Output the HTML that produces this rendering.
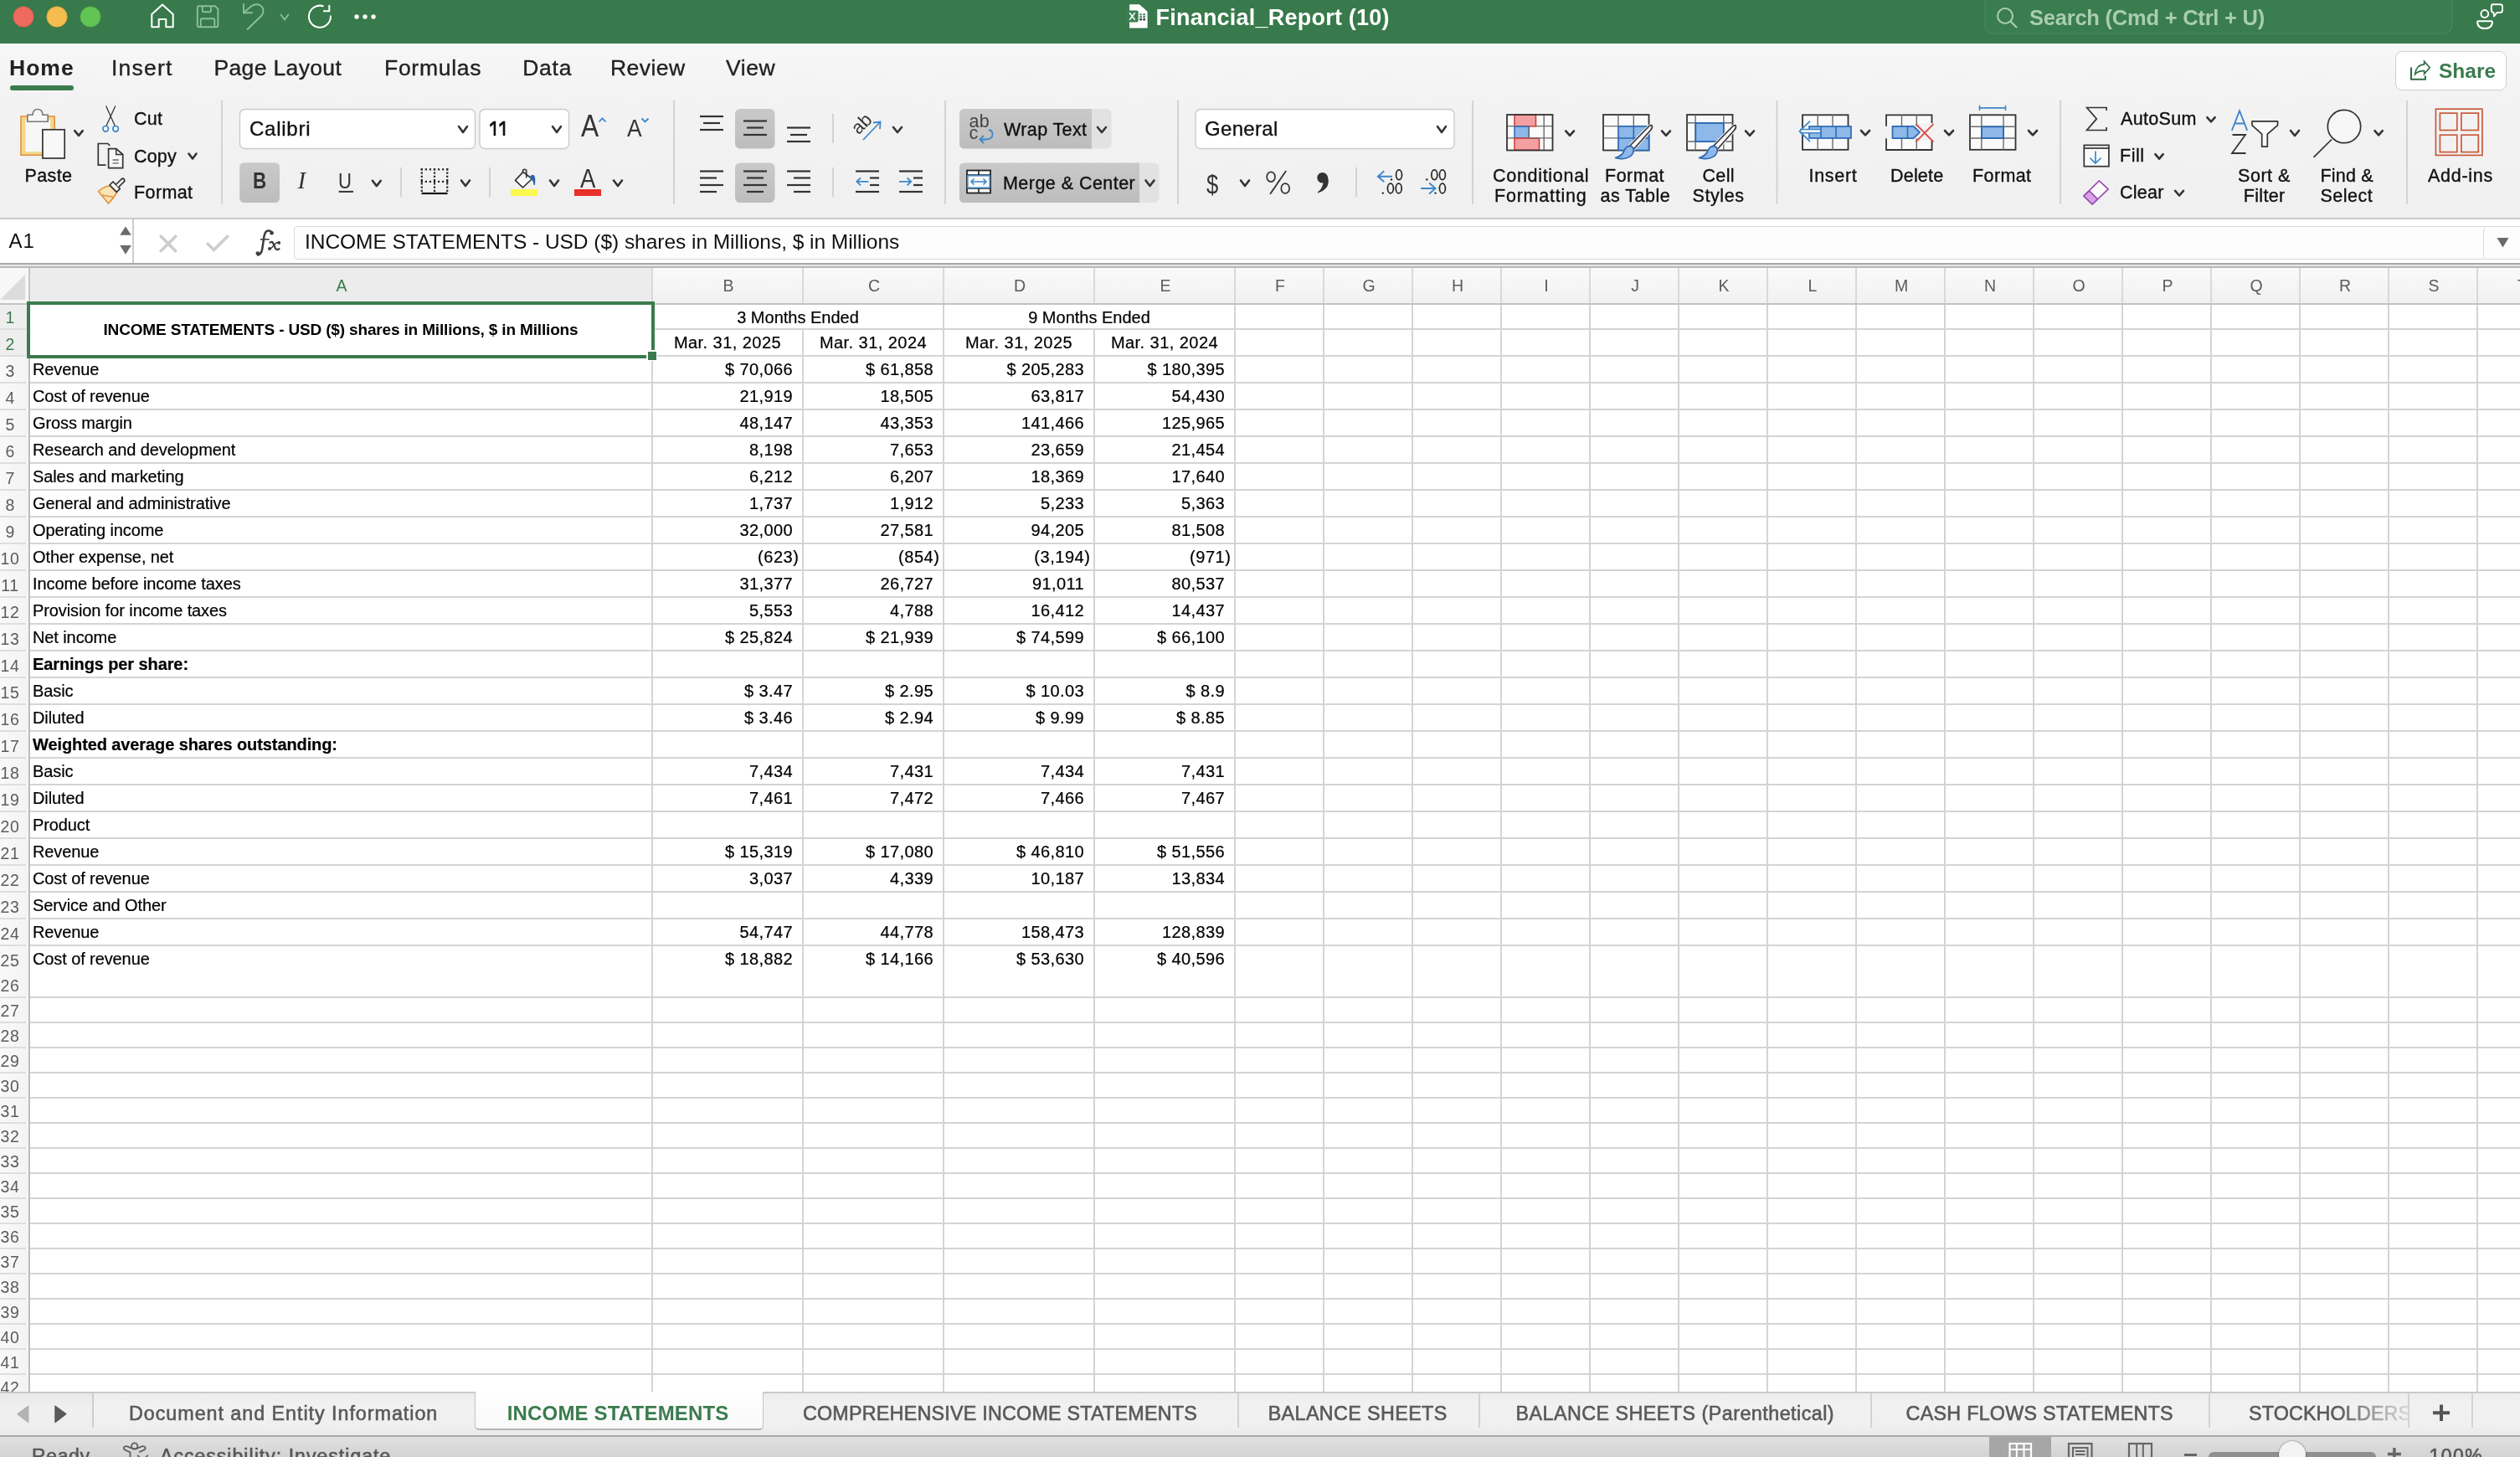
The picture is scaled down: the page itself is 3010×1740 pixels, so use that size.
<!DOCTYPE html>
<html><head><meta charset="utf-8"><style>
html,body{margin:0;padding:0;width:3010px;height:1740px;overflow:hidden;background:#fff;font-family:"Liberation Sans", sans-serif}
.t{position:absolute;white-space:pre;line-height:1;font-family:"Liberation Sans", sans-serif}
.r{position:absolute;display:block}
#root{position:absolute;left:0;top:0;width:3010px;height:1740px;overflow:hidden;will-change:transform}
</style></head><body><div id="root">
<div class="r" style="left:0px;top:262px;width:3010px;height:52px;background:#fff"></div><div class="r" style="left:0px;top:314px;width:3010px;height:2px;background:#a9a9a9"></div><div class="r" style="left:0px;top:316px;width:3010px;height:2px;background:#e6e6e6"></div><div class="r" style="left:0px;top:318px;width:3010px;height:2px;background:#b9b9b9"></div><div class="r" style="left:0px;top:320px;width:3010px;height:42px;background:linear-gradient(#fafafa,#f1f1f1)"></div><div class="r" style="left:0px;top:320px;width:34px;height:42px;background:#f7f7f7"></div><svg class="r" style="left:0px;top:328px;" width="31" height="31" viewBox="0 0 31 31"><polygon points="30,0 30,30 0,30" fill="#dcdcdc"/></svg><div class="r" style="left:36px;top:320px;width:742px;height:42px;background:#ececec"></div><div class="r" style="left:36px;top:364px;width:2974px;height:1298px;background:#fff"></div><div class="r" style="left:0px;top:364px;width:34px;height:1298px;background:linear-gradient(90deg,#f9f9f9,#f3f3f3)"></div><div class="r" style="left:0px;top:364px;width:32px;height:60px;background:#eeeeee"></div><div class="r" style="left:34px;top:320px;width:2px;height:44px;background:#c6c6c6"></div><div class="r" style="left:778px;top:320px;width:2px;height:42px;background:#d9d9d9"></div><div class="r" style="left:958px;top:320px;width:2px;height:42px;background:#d9d9d9"></div><div class="r" style="left:1126px;top:320px;width:2px;height:42px;background:#d9d9d9"></div><div class="r" style="left:1306px;top:320px;width:2px;height:42px;background:#d9d9d9"></div><div class="r" style="left:1474px;top:320px;width:2px;height:42px;background:#d9d9d9"></div><div class="r" style="left:1580px;top:320px;width:2px;height:42px;background:#d9d9d9"></div><div class="r" style="left:1686px;top:320px;width:2px;height:42px;background:#d9d9d9"></div><div class="r" style="left:1792px;top:320px;width:2px;height:42px;background:#d9d9d9"></div><div class="r" style="left:1898px;top:320px;width:2px;height:42px;background:#d9d9d9"></div><div class="r" style="left:2004px;top:320px;width:2px;height:42px;background:#d9d9d9"></div><div class="r" style="left:2110px;top:320px;width:2px;height:42px;background:#d9d9d9"></div><div class="r" style="left:2216px;top:320px;width:2px;height:42px;background:#d9d9d9"></div><div class="r" style="left:2322px;top:320px;width:2px;height:42px;background:#d9d9d9"></div><div class="r" style="left:2428px;top:320px;width:2px;height:42px;background:#d9d9d9"></div><div class="r" style="left:2534px;top:320px;width:2px;height:42px;background:#d9d9d9"></div><div class="r" style="left:2640px;top:320px;width:2px;height:42px;background:#d9d9d9"></div><div class="r" style="left:2746px;top:320px;width:2px;height:42px;background:#d9d9d9"></div><div class="r" style="left:2852px;top:320px;width:2px;height:42px;background:#d9d9d9"></div><div class="r" style="left:2958px;top:320px;width:2px;height:42px;background:#d9d9d9"></div><div class="r" style="left:0px;top:362px;width:3010px;height:2px;background:#c3c3c3"></div><div class="r" style="left:780px;top:392px;width:2230px;height:2px;background:#d4d4d4"></div><div class="r" style="left:0px;top:392px;width:31px;height:2px;background:#dedede"></div><div class="r" style="left:36px;top:424px;width:2974px;height:2px;background:#d4d4d4"></div><div class="r" style="left:0px;top:424px;width:31px;height:2px;background:#dedede"></div><div class="r" style="left:36px;top:456px;width:2974px;height:2px;background:#d4d4d4"></div><div class="r" style="left:0px;top:456px;width:31px;height:2px;background:#dedede"></div><div class="r" style="left:36px;top:488px;width:2974px;height:2px;background:#d4d4d4"></div><div class="r" style="left:0px;top:488px;width:31px;height:2px;background:#dedede"></div><div class="r" style="left:36px;top:520px;width:2974px;height:2px;background:#d4d4d4"></div><div class="r" style="left:0px;top:520px;width:31px;height:2px;background:#dedede"></div><div class="r" style="left:36px;top:552px;width:2974px;height:2px;background:#d4d4d4"></div><div class="r" style="left:0px;top:552px;width:31px;height:2px;background:#dedede"></div><div class="r" style="left:36px;top:584px;width:2974px;height:2px;background:#d4d4d4"></div><div class="r" style="left:0px;top:584px;width:31px;height:2px;background:#dedede"></div><div class="r" style="left:36px;top:616px;width:2974px;height:2px;background:#d4d4d4"></div><div class="r" style="left:0px;top:616px;width:31px;height:2px;background:#dedede"></div><div class="r" style="left:36px;top:648px;width:2974px;height:2px;background:#d4d4d4"></div><div class="r" style="left:0px;top:648px;width:31px;height:2px;background:#dedede"></div><div class="r" style="left:36px;top:680px;width:2974px;height:2px;background:#d4d4d4"></div><div class="r" style="left:0px;top:680px;width:31px;height:2px;background:#dedede"></div><div class="r" style="left:36px;top:712px;width:2974px;height:2px;background:#d4d4d4"></div><div class="r" style="left:0px;top:712px;width:31px;height:2px;background:#dedede"></div><div class="r" style="left:36px;top:744px;width:2974px;height:2px;background:#d4d4d4"></div><div class="r" style="left:0px;top:744px;width:31px;height:2px;background:#dedede"></div><div class="r" style="left:36px;top:776px;width:2974px;height:2px;background:#d4d4d4"></div><div class="r" style="left:0px;top:776px;width:31px;height:2px;background:#dedede"></div><div class="r" style="left:36px;top:808px;width:2974px;height:2px;background:#d4d4d4"></div><div class="r" style="left:0px;top:808px;width:31px;height:2px;background:#dedede"></div><div class="r" style="left:36px;top:840px;width:2974px;height:2px;background:#d4d4d4"></div><div class="r" style="left:0px;top:840px;width:31px;height:2px;background:#dedede"></div><div class="r" style="left:36px;top:872px;width:2974px;height:2px;background:#d4d4d4"></div><div class="r" style="left:0px;top:872px;width:31px;height:2px;background:#dedede"></div><div class="r" style="left:36px;top:904px;width:2974px;height:2px;background:#d4d4d4"></div><div class="r" style="left:0px;top:904px;width:31px;height:2px;background:#dedede"></div><div class="r" style="left:36px;top:936px;width:2974px;height:2px;background:#d4d4d4"></div><div class="r" style="left:0px;top:936px;width:31px;height:2px;background:#dedede"></div><div class="r" style="left:36px;top:968px;width:2974px;height:2px;background:#d4d4d4"></div><div class="r" style="left:0px;top:968px;width:31px;height:2px;background:#dedede"></div><div class="r" style="left:36px;top:1000px;width:2974px;height:2px;background:#d4d4d4"></div><div class="r" style="left:0px;top:1000px;width:31px;height:2px;background:#dedede"></div><div class="r" style="left:36px;top:1032px;width:2974px;height:2px;background:#d4d4d4"></div><div class="r" style="left:0px;top:1032px;width:31px;height:2px;background:#dedede"></div><div class="r" style="left:36px;top:1064px;width:2974px;height:2px;background:#d4d4d4"></div><div class="r" style="left:0px;top:1064px;width:31px;height:2px;background:#dedede"></div><div class="r" style="left:36px;top:1096px;width:2974px;height:2px;background:#d4d4d4"></div><div class="r" style="left:0px;top:1096px;width:31px;height:2px;background:#dedede"></div><div class="r" style="left:36px;top:1128px;width:2974px;height:2px;background:#d4d4d4"></div><div class="r" style="left:0px;top:1128px;width:31px;height:2px;background:#dedede"></div><div class="r" style="left:36px;top:1190px;width:2974px;height:2px;background:#d4d4d4"></div><div class="r" style="left:0px;top:1190px;width:31px;height:2px;background:#dedede"></div><div class="r" style="left:36px;top:1220px;width:2974px;height:2px;background:#d4d4d4"></div><div class="r" style="left:0px;top:1220px;width:31px;height:2px;background:#dedede"></div><div class="r" style="left:36px;top:1250px;width:2974px;height:2px;background:#d4d4d4"></div><div class="r" style="left:0px;top:1250px;width:31px;height:2px;background:#dedede"></div><div class="r" style="left:36px;top:1280px;width:2974px;height:2px;background:#d4d4d4"></div><div class="r" style="left:0px;top:1280px;width:31px;height:2px;background:#dedede"></div><div class="r" style="left:36px;top:1310px;width:2974px;height:2px;background:#d4d4d4"></div><div class="r" style="left:0px;top:1310px;width:31px;height:2px;background:#dedede"></div><div class="r" style="left:36px;top:1340px;width:2974px;height:2px;background:#d4d4d4"></div><div class="r" style="left:0px;top:1340px;width:31px;height:2px;background:#dedede"></div><div class="r" style="left:36px;top:1370px;width:2974px;height:2px;background:#d4d4d4"></div><div class="r" style="left:0px;top:1370px;width:31px;height:2px;background:#dedede"></div><div class="r" style="left:36px;top:1400px;width:2974px;height:2px;background:#d4d4d4"></div><div class="r" style="left:0px;top:1400px;width:31px;height:2px;background:#dedede"></div><div class="r" style="left:36px;top:1430px;width:2974px;height:2px;background:#d4d4d4"></div><div class="r" style="left:0px;top:1430px;width:31px;height:2px;background:#dedede"></div><div class="r" style="left:36px;top:1460px;width:2974px;height:2px;background:#d4d4d4"></div><div class="r" style="left:0px;top:1460px;width:31px;height:2px;background:#dedede"></div><div class="r" style="left:36px;top:1490px;width:2974px;height:2px;background:#d4d4d4"></div><div class="r" style="left:0px;top:1490px;width:31px;height:2px;background:#dedede"></div><div class="r" style="left:36px;top:1520px;width:2974px;height:2px;background:#d4d4d4"></div><div class="r" style="left:0px;top:1520px;width:31px;height:2px;background:#dedede"></div><div class="r" style="left:36px;top:1550px;width:2974px;height:2px;background:#d4d4d4"></div><div class="r" style="left:0px;top:1550px;width:31px;height:2px;background:#dedede"></div><div class="r" style="left:36px;top:1580px;width:2974px;height:2px;background:#d4d4d4"></div><div class="r" style="left:0px;top:1580px;width:31px;height:2px;background:#dedede"></div><div class="r" style="left:36px;top:1610px;width:2974px;height:2px;background:#d4d4d4"></div><div class="r" style="left:0px;top:1610px;width:31px;height:2px;background:#dedede"></div><div class="r" style="left:36px;top:1640px;width:2974px;height:2px;background:#d4d4d4"></div><div class="r" style="left:0px;top:1640px;width:31px;height:2px;background:#dedede"></div><div class="r" style="left:778px;top:364px;width:2px;height:1298px;background:#d4d4d4"></div><div class="r" style="left:958px;top:394px;width:2px;height:1268px;background:#d4d4d4"></div><div class="r" style="left:1126px;top:364px;width:2px;height:1298px;background:#d4d4d4"></div><div class="r" style="left:1306px;top:394px;width:2px;height:1268px;background:#d4d4d4"></div><div class="r" style="left:1474px;top:364px;width:2px;height:1298px;background:#d4d4d4"></div><div class="r" style="left:1580px;top:364px;width:2px;height:1298px;background:#d4d4d4"></div><div class="r" style="left:1686px;top:364px;width:2px;height:1298px;background:#d4d4d4"></div><div class="r" style="left:1792px;top:364px;width:2px;height:1298px;background:#d4d4d4"></div><div class="r" style="left:1898px;top:364px;width:2px;height:1298px;background:#d4d4d4"></div><div class="r" style="left:2004px;top:364px;width:2px;height:1298px;background:#d4d4d4"></div><div class="r" style="left:2110px;top:364px;width:2px;height:1298px;background:#d4d4d4"></div><div class="r" style="left:2216px;top:364px;width:2px;height:1298px;background:#d4d4d4"></div><div class="r" style="left:2322px;top:364px;width:2px;height:1298px;background:#d4d4d4"></div><div class="r" style="left:2428px;top:364px;width:2px;height:1298px;background:#d4d4d4"></div><div class="r" style="left:2534px;top:364px;width:2px;height:1298px;background:#d4d4d4"></div><div class="r" style="left:2640px;top:364px;width:2px;height:1298px;background:#d4d4d4"></div><div class="r" style="left:2746px;top:364px;width:2px;height:1298px;background:#d4d4d4"></div><div class="r" style="left:2852px;top:364px;width:2px;height:1298px;background:#d4d4d4"></div><div class="r" style="left:2958px;top:364px;width:2px;height:1298px;background:#d4d4d4"></div><div class="r" style="left:34px;top:364px;width:2px;height:1298px;background:#bdbdbd"></div><div class="t" style="left:-592.0px;width:2000px;text-align:center;top:332.43px;font-size:19.5px;color:#3b7b4e;font-weight:400;">A</div><div class="t" style="left:-130.0px;width:2000px;text-align:center;top:332.43px;font-size:19.5px;color:#5c5c5c;font-weight:400;">B</div><div class="t" style="left:44.0px;width:2000px;text-align:center;top:332.43px;font-size:19.5px;color:#5c5c5c;font-weight:400;">C</div><div class="t" style="left:218.0px;width:2000px;text-align:center;top:332.43px;font-size:19.5px;color:#5c5c5c;font-weight:400;">D</div><div class="t" style="left:392.0px;width:2000px;text-align:center;top:332.43px;font-size:19.5px;color:#5c5c5c;font-weight:400;">E</div><div class="t" style="left:529.0px;width:2000px;text-align:center;top:332.43px;font-size:19.5px;color:#5c5c5c;font-weight:400;">F</div><div class="t" style="left:635.0px;width:2000px;text-align:center;top:332.43px;font-size:19.5px;color:#5c5c5c;font-weight:400;">G</div><div class="t" style="left:741.0px;width:2000px;text-align:center;top:332.43px;font-size:19.5px;color:#5c5c5c;font-weight:400;">H</div><div class="t" style="left:847.0px;width:2000px;text-align:center;top:332.43px;font-size:19.5px;color:#5c5c5c;font-weight:400;">I</div><div class="t" style="left:953.0px;width:2000px;text-align:center;top:332.43px;font-size:19.5px;color:#5c5c5c;font-weight:400;">J</div><div class="t" style="left:1059.0px;width:2000px;text-align:center;top:332.43px;font-size:19.5px;color:#5c5c5c;font-weight:400;">K</div><div class="t" style="left:1165.0px;width:2000px;text-align:center;top:332.43px;font-size:19.5px;color:#5c5c5c;font-weight:400;">L</div><div class="t" style="left:1271.0px;width:2000px;text-align:center;top:332.43px;font-size:19.5px;color:#5c5c5c;font-weight:400;">M</div><div class="t" style="left:1377.0px;width:2000px;text-align:center;top:332.43px;font-size:19.5px;color:#5c5c5c;font-weight:400;">N</div><div class="t" style="left:1483.0px;width:2000px;text-align:center;top:332.43px;font-size:19.5px;color:#5c5c5c;font-weight:400;">O</div><div class="t" style="left:1589.0px;width:2000px;text-align:center;top:332.43px;font-size:19.5px;color:#5c5c5c;font-weight:400;">P</div><div class="t" style="left:1695.0px;width:2000px;text-align:center;top:332.43px;font-size:19.5px;color:#5c5c5c;font-weight:400;">Q</div><div class="t" style="left:1801.0px;width:2000px;text-align:center;top:332.43px;font-size:19.5px;color:#5c5c5c;font-weight:400;">R</div><div class="t" style="left:1907.0px;width:2000px;text-align:center;top:332.43px;font-size:19.5px;color:#5c5c5c;font-weight:400;">S</div><div class="t" style="left:2013.0px;width:2000px;text-align:center;top:332.43px;font-size:19.5px;color:#5c5c5c;font-weight:400;">T</div><div class="t" style="left:-988px;width:2000px;text-align:center;top:370.23px;font-size:19.5px;color:#3b7b4e;font-weight:400;">1</div><div class="t" style="left:-988px;width:2000px;text-align:center;top:402.23px;font-size:19.5px;color:#3b7b4e;font-weight:400;">2</div><div class="t" style="left:-988px;width:2000px;text-align:center;top:434.23px;font-size:19.5px;color:#5c5c5c;font-weight:400;">3</div><div class="t" style="left:-988px;width:2000px;text-align:center;top:466.23px;font-size:19.5px;color:#5c5c5c;font-weight:400;">4</div><div class="t" style="left:-988px;width:2000px;text-align:center;top:498.22px;font-size:19.5px;color:#5c5c5c;font-weight:400;">5</div><div class="t" style="left:-988px;width:2000px;text-align:center;top:530.22px;font-size:19.5px;color:#5c5c5c;font-weight:400;">6</div><div class="t" style="left:-988px;width:2000px;text-align:center;top:562.22px;font-size:19.5px;color:#5c5c5c;font-weight:400;">7</div><div class="t" style="left:-988px;width:2000px;text-align:center;top:594.22px;font-size:19.5px;color:#5c5c5c;font-weight:400;">8</div><div class="t" style="left:-988px;width:2000px;text-align:center;top:626.22px;font-size:19.5px;color:#5c5c5c;font-weight:400;">9</div><div class="t" style="left:-988px;width:2000px;text-align:center;top:658.22px;font-size:19.5px;color:#5c5c5c;font-weight:400;letter-spacing:0.6px">10</div><div class="t" style="left:-988px;width:2000px;text-align:center;top:690.22px;font-size:19.5px;color:#5c5c5c;font-weight:400;letter-spacing:0.6px">11</div><div class="t" style="left:-988px;width:2000px;text-align:center;top:722.22px;font-size:19.5px;color:#5c5c5c;font-weight:400;letter-spacing:0.6px">12</div><div class="t" style="left:-988px;width:2000px;text-align:center;top:754.22px;font-size:19.5px;color:#5c5c5c;font-weight:400;letter-spacing:0.6px">13</div><div class="t" style="left:-988px;width:2000px;text-align:center;top:786.22px;font-size:19.5px;color:#5c5c5c;font-weight:400;letter-spacing:0.6px">14</div><div class="t" style="left:-988px;width:2000px;text-align:center;top:818.22px;font-size:19.5px;color:#5c5c5c;font-weight:400;letter-spacing:0.6px">15</div><div class="t" style="left:-988px;width:2000px;text-align:center;top:850.22px;font-size:19.5px;color:#5c5c5c;font-weight:400;letter-spacing:0.6px">16</div><div class="t" style="left:-988px;width:2000px;text-align:center;top:882.22px;font-size:19.5px;color:#5c5c5c;font-weight:400;letter-spacing:0.6px">17</div><div class="t" style="left:-988px;width:2000px;text-align:center;top:914.22px;font-size:19.5px;color:#5c5c5c;font-weight:400;letter-spacing:0.6px">18</div><div class="t" style="left:-988px;width:2000px;text-align:center;top:946.22px;font-size:19.5px;color:#5c5c5c;font-weight:400;letter-spacing:0.6px">19</div><div class="t" style="left:-988px;width:2000px;text-align:center;top:978.22px;font-size:19.5px;color:#5c5c5c;font-weight:400;letter-spacing:0.6px">20</div><div class="t" style="left:-988px;width:2000px;text-align:center;top:1010.22px;font-size:19.5px;color:#5c5c5c;font-weight:400;letter-spacing:0.6px">21</div><div class="t" style="left:-988px;width:2000px;text-align:center;top:1042.22px;font-size:19.5px;color:#5c5c5c;font-weight:400;letter-spacing:0.6px">22</div><div class="t" style="left:-988px;width:2000px;text-align:center;top:1074.22px;font-size:19.5px;color:#5c5c5c;font-weight:400;letter-spacing:0.6px">23</div><div class="t" style="left:-988px;width:2000px;text-align:center;top:1106.22px;font-size:19.5px;color:#5c5c5c;font-weight:400;letter-spacing:0.6px">24</div><div class="t" style="left:-988px;width:2000px;text-align:center;top:1138.22px;font-size:19.5px;color:#5c5c5c;font-weight:400;letter-spacing:0.6px">25</div><div class="t" style="left:-988px;width:2000px;text-align:center;top:1168.22px;font-size:19.5px;color:#5c5c5c;font-weight:400;letter-spacing:0.6px">26</div><div class="t" style="left:-988px;width:2000px;text-align:center;top:1198.22px;font-size:19.5px;color:#5c5c5c;font-weight:400;letter-spacing:0.6px">27</div><div class="t" style="left:-988px;width:2000px;text-align:center;top:1228.22px;font-size:19.5px;color:#5c5c5c;font-weight:400;letter-spacing:0.6px">28</div><div class="t" style="left:-988px;width:2000px;text-align:center;top:1258.22px;font-size:19.5px;color:#5c5c5c;font-weight:400;letter-spacing:0.6px">29</div><div class="t" style="left:-988px;width:2000px;text-align:center;top:1288.22px;font-size:19.5px;color:#5c5c5c;font-weight:400;letter-spacing:0.6px">30</div><div class="t" style="left:-988px;width:2000px;text-align:center;top:1318.22px;font-size:19.5px;color:#5c5c5c;font-weight:400;letter-spacing:0.6px">31</div><div class="t" style="left:-988px;width:2000px;text-align:center;top:1348.22px;font-size:19.5px;color:#5c5c5c;font-weight:400;letter-spacing:0.6px">32</div><div class="t" style="left:-988px;width:2000px;text-align:center;top:1378.22px;font-size:19.5px;color:#5c5c5c;font-weight:400;letter-spacing:0.6px">33</div><div class="t" style="left:-988px;width:2000px;text-align:center;top:1408.22px;font-size:19.5px;color:#5c5c5c;font-weight:400;letter-spacing:0.6px">34</div><div class="t" style="left:-988px;width:2000px;text-align:center;top:1438.22px;font-size:19.5px;color:#5c5c5c;font-weight:400;letter-spacing:0.6px">35</div><div class="t" style="left:-988px;width:2000px;text-align:center;top:1468.22px;font-size:19.5px;color:#5c5c5c;font-weight:400;letter-spacing:0.6px">36</div><div class="t" style="left:-988px;width:2000px;text-align:center;top:1498.22px;font-size:19.5px;color:#5c5c5c;font-weight:400;letter-spacing:0.6px">37</div><div class="t" style="left:-988px;width:2000px;text-align:center;top:1528.22px;font-size:19.5px;color:#5c5c5c;font-weight:400;letter-spacing:0.6px">38</div><div class="t" style="left:-988px;width:2000px;text-align:center;top:1558.22px;font-size:19.5px;color:#5c5c5c;font-weight:400;letter-spacing:0.6px">39</div><div class="t" style="left:-988px;width:2000px;text-align:center;top:1588.22px;font-size:19.5px;color:#5c5c5c;font-weight:400;letter-spacing:0.6px">40</div><div class="t" style="left:-988px;width:2000px;text-align:center;top:1618.22px;font-size:19.5px;color:#5c5c5c;font-weight:400;letter-spacing:0.6px">41</div><div class="t" style="left:-988px;width:2000px;text-align:center;top:1648.22px;font-size:19.5px;color:#5c5c5c;font-weight:400;letter-spacing:0.6px">42</div><div class="r" style="left:32px;top:360px;width:750px;height:68px;border:4px solid #3b7b4e;box-sizing:border-box;background:transparent"></div><div class="r" style="left:772px;top:418px;width:13px;height:13px;background:#fff"></div><div class="r" style="left:774px;top:420px;width:10px;height:10px;background:#3b7b4e"></div><div class="r" style="left:158px;top:262px;width:2px;height:52px;background:#cbcbcb"></div><div class="t " style="left:10.5px;top:275.60px;font-size:24px;color:#111;font-weight:400;;letter-spacing:1.000px">A1</div><svg class="r" style="left:140px;top:265px;" width="22" height="45" viewBox="0 0 22 45"><polygon points="3.2,15.8 10,5.5 16.8,15.8" fill="#6a6a6a"/><polygon points="3.2,28 10,38.8 16.8,28" fill="#6a6a6a"/></svg><svg class="r" style="left:185px;top:275px;" width="95" height="32" viewBox="0 0 95 32"><path d="M7.5 7.5 L24.5 24.5 M24.5 7.5 L7.5 24.5" stroke="#cdcdcd" stroke-width="3.6" stroke-linecap="square"/><path d="M63.5 16.5 L70.5 23.5 L86.5 7.5" fill="none" stroke="#cdcdcd" stroke-width="3.6" stroke-linecap="square"/></svg><svg class="r" style="left:295px;top:268px;" width="45" height="42" viewBox="0 0 45 42"><g transform="translate(-295,-268)" fill="none" stroke="#3d3d3d" stroke-linecap="round"><path d="M324.6 277.4 Q322.5 274.6 319 275.8 Q316.3 277.2 315.5 282 L313.3 297 Q312.3 303.5 308.2 304.6" stroke-width="2.5"/><path d="M310.9 285.9 H321.7" stroke-width="1.6" stroke-linecap="butt"/><path d="M322.6 289.6 Q325 287.6 326.4 290.8 L328.6 296 Q330.3 299.3 333.4 297.3" stroke-width="2.3"/><path d="M333.3 289.3 Q330.8 288.6 327.6 292.4 L323.3 297" stroke-width="1.5"/><circle cx="324.6" cy="278.3" r="2.3" fill="#3d3d3d" stroke="none"/><circle cx="307.8" cy="302.5" r="2.3" fill="#3d3d3d" stroke="none"/><circle cx="333.2" cy="290" r="1.9" fill="#3d3d3d" stroke="none"/><circle cx="322" cy="297" r="2" fill="#3d3d3d" stroke="none"/></g></svg><div class="r" style="left:351px;top:269.5px;width:2620px;height:40px;background:#fdfdfd;border:1.3px solid #d9d9d9;border-radius:4px;box-sizing:border-box"></div><div class="r" style="left:2966px;top:269.5px;width:60px;height:40px;background:#fdfdfd;border:1.3px solid #d9d9d9;border-radius:5px;box-sizing:border-box"></div><svg class="r" style="left:2980px;top:282px;" width="20" height="16" viewBox="0 0 20 16"><polygon points="2.5,2 16.5,2 9.5,13.5" fill="#6a6a6a"/></svg><div class="t " style="left:364px;top:276.68px;font-size:24.5px;color:#111;font-weight:400;;letter-spacing:-0.037px">INCOME STATEMENTS - USD ($) shares in Millions, $ in Millions</div><div class="t" style="left:-593px;width:2000px;text-align:center;top:384.15px;font-size:19px;color:#000;font-weight:700;letter-spacing:-0.16px">INCOME STATEMENTS - USD ($) shares in Millions, $ in Millions</div><div class="t" style="left:-47.0px;width:2000px;text-align:center;top:368.50px;font-size:20px;color:#000;font-weight:400;-webkit-text-stroke:0.2px #000">3 Months Ended</div><div class="t" style="left:301.0px;width:2000px;text-align:center;top:368.50px;font-size:20px;color:#000;font-weight:400;-webkit-text-stroke:0.2px #000">9 Months Ended</div><div class="t" style="left:-131.0px;width:2000px;text-align:center;top:399.00px;font-size:20px;color:#000;font-weight:400;letter-spacing:0.45px;-webkit-text-stroke:0.2px #000">Mar. 31, 2025</div><div class="t" style="left:43.0px;width:2000px;text-align:center;top:399.00px;font-size:20px;color:#000;font-weight:400;letter-spacing:0.45px;-webkit-text-stroke:0.2px #000">Mar. 31, 2024</div><div class="t" style="left:217.0px;width:2000px;text-align:center;top:399.00px;font-size:20px;color:#000;font-weight:400;letter-spacing:0.45px;-webkit-text-stroke:0.2px #000">Mar. 31, 2025</div><div class="t" style="left:391.0px;width:2000px;text-align:center;top:399.00px;font-size:20px;color:#000;font-weight:400;letter-spacing:0.45px;-webkit-text-stroke:0.2px #000">Mar. 31, 2024</div><div class="t " style="left:39px;top:431.00px;font-size:20px;color:#000;font-weight:400;letter-spacing:-0.1px;-webkit-text-stroke:0.2px #000">Revenue</div><div class="t" style="right:2063px;top:431.00px;font-size:20px;color:#000;font-weight:400;letter-spacing:0.4px;-webkit-text-stroke:0.2px #000">$ 70,066</div><div class="t" style="right:1895px;top:431.00px;font-size:20px;color:#000;font-weight:400;letter-spacing:0.4px;-webkit-text-stroke:0.2px #000">$ 61,858</div><div class="t" style="right:1715px;top:431.00px;font-size:20px;color:#000;font-weight:400;letter-spacing:0.4px;-webkit-text-stroke:0.2px #000">$ 205,283</div><div class="t" style="right:1547px;top:431.00px;font-size:20px;color:#000;font-weight:400;letter-spacing:0.4px;-webkit-text-stroke:0.2px #000">$ 180,395</div><div class="t " style="left:39px;top:463.00px;font-size:20px;color:#000;font-weight:400;letter-spacing:-0.1px;-webkit-text-stroke:0.2px #000">Cost of revenue</div><div class="t" style="right:2063px;top:463.00px;font-size:20px;color:#000;font-weight:400;letter-spacing:0.4px;-webkit-text-stroke:0.2px #000">21,919</div><div class="t" style="right:1895px;top:463.00px;font-size:20px;color:#000;font-weight:400;letter-spacing:0.4px;-webkit-text-stroke:0.2px #000">18,505</div><div class="t" style="right:1715px;top:463.00px;font-size:20px;color:#000;font-weight:400;letter-spacing:0.4px;-webkit-text-stroke:0.2px #000">63,817</div><div class="t" style="right:1547px;top:463.00px;font-size:20px;color:#000;font-weight:400;letter-spacing:0.4px;-webkit-text-stroke:0.2px #000">54,430</div><div class="t " style="left:39px;top:495.00px;font-size:20px;color:#000;font-weight:400;letter-spacing:-0.1px;-webkit-text-stroke:0.2px #000">Gross margin</div><div class="t" style="right:2063px;top:495.00px;font-size:20px;color:#000;font-weight:400;letter-spacing:0.4px;-webkit-text-stroke:0.2px #000">48,147</div><div class="t" style="right:1895px;top:495.00px;font-size:20px;color:#000;font-weight:400;letter-spacing:0.4px;-webkit-text-stroke:0.2px #000">43,353</div><div class="t" style="right:1715px;top:495.00px;font-size:20px;color:#000;font-weight:400;letter-spacing:0.4px;-webkit-text-stroke:0.2px #000">141,466</div><div class="t" style="right:1547px;top:495.00px;font-size:20px;color:#000;font-weight:400;letter-spacing:0.4px;-webkit-text-stroke:0.2px #000">125,965</div><div class="t " style="left:39px;top:527.00px;font-size:20px;color:#000;font-weight:400;letter-spacing:-0.1px;-webkit-text-stroke:0.2px #000">Research and development</div><div class="t" style="right:2063px;top:527.00px;font-size:20px;color:#000;font-weight:400;letter-spacing:0.4px;-webkit-text-stroke:0.2px #000">8,198</div><div class="t" style="right:1895px;top:527.00px;font-size:20px;color:#000;font-weight:400;letter-spacing:0.4px;-webkit-text-stroke:0.2px #000">7,653</div><div class="t" style="right:1715px;top:527.00px;font-size:20px;color:#000;font-weight:400;letter-spacing:0.4px;-webkit-text-stroke:0.2px #000">23,659</div><div class="t" style="right:1547px;top:527.00px;font-size:20px;color:#000;font-weight:400;letter-spacing:0.4px;-webkit-text-stroke:0.2px #000">21,454</div><div class="t " style="left:39px;top:559.00px;font-size:20px;color:#000;font-weight:400;letter-spacing:-0.1px;-webkit-text-stroke:0.2px #000">Sales and marketing</div><div class="t" style="right:2063px;top:559.00px;font-size:20px;color:#000;font-weight:400;letter-spacing:0.4px;-webkit-text-stroke:0.2px #000">6,212</div><div class="t" style="right:1895px;top:559.00px;font-size:20px;color:#000;font-weight:400;letter-spacing:0.4px;-webkit-text-stroke:0.2px #000">6,207</div><div class="t" style="right:1715px;top:559.00px;font-size:20px;color:#000;font-weight:400;letter-spacing:0.4px;-webkit-text-stroke:0.2px #000">18,369</div><div class="t" style="right:1547px;top:559.00px;font-size:20px;color:#000;font-weight:400;letter-spacing:0.4px;-webkit-text-stroke:0.2px #000">17,640</div><div class="t " style="left:39px;top:591.00px;font-size:20px;color:#000;font-weight:400;letter-spacing:-0.1px;-webkit-text-stroke:0.2px #000">General and administrative</div><div class="t" style="right:2063px;top:591.00px;font-size:20px;color:#000;font-weight:400;letter-spacing:0.4px;-webkit-text-stroke:0.2px #000">1,737</div><div class="t" style="right:1895px;top:591.00px;font-size:20px;color:#000;font-weight:400;letter-spacing:0.4px;-webkit-text-stroke:0.2px #000">1,912</div><div class="t" style="right:1715px;top:591.00px;font-size:20px;color:#000;font-weight:400;letter-spacing:0.4px;-webkit-text-stroke:0.2px #000">5,233</div><div class="t" style="right:1547px;top:591.00px;font-size:20px;color:#000;font-weight:400;letter-spacing:0.4px;-webkit-text-stroke:0.2px #000">5,363</div><div class="t " style="left:39px;top:623.00px;font-size:20px;color:#000;font-weight:400;letter-spacing:-0.1px;-webkit-text-stroke:0.2px #000">Operating income</div><div class="t" style="right:2063px;top:623.00px;font-size:20px;color:#000;font-weight:400;letter-spacing:0.4px;-webkit-text-stroke:0.2px #000">32,000</div><div class="t" style="right:1895px;top:623.00px;font-size:20px;color:#000;font-weight:400;letter-spacing:0.4px;-webkit-text-stroke:0.2px #000">27,581</div><div class="t" style="right:1715px;top:623.00px;font-size:20px;color:#000;font-weight:400;letter-spacing:0.4px;-webkit-text-stroke:0.2px #000">94,205</div><div class="t" style="right:1547px;top:623.00px;font-size:20px;color:#000;font-weight:400;letter-spacing:0.4px;-webkit-text-stroke:0.2px #000">81,508</div><div class="t " style="left:39px;top:655.00px;font-size:20px;color:#000;font-weight:400;letter-spacing:-0.1px;-webkit-text-stroke:0.2px #000">Other expense, net</div><div class="t" style="right:2055.5px;top:655.00px;font-size:20px;color:#000;font-weight:400;letter-spacing:0.55px;-webkit-text-stroke:0.2px #000">(623)</div><div class="t" style="right:1887.5px;top:655.00px;font-size:20px;color:#000;font-weight:400;letter-spacing:0.55px;-webkit-text-stroke:0.2px #000">(854)</div><div class="t" style="right:1707.5px;top:655.00px;font-size:20px;color:#000;font-weight:400;letter-spacing:0.55px;-webkit-text-stroke:0.2px #000">(3,194)</div><div class="t" style="right:1539.5px;top:655.00px;font-size:20px;color:#000;font-weight:400;letter-spacing:0.55px;-webkit-text-stroke:0.2px #000">(971)</div><div class="t " style="left:39px;top:687.00px;font-size:20px;color:#000;font-weight:400;letter-spacing:-0.1px;-webkit-text-stroke:0.2px #000">Income before income taxes</div><div class="t" style="right:2063px;top:687.00px;font-size:20px;color:#000;font-weight:400;letter-spacing:0.4px;-webkit-text-stroke:0.2px #000">31,377</div><div class="t" style="right:1895px;top:687.00px;font-size:20px;color:#000;font-weight:400;letter-spacing:0.4px;-webkit-text-stroke:0.2px #000">26,727</div><div class="t" style="right:1715px;top:687.00px;font-size:20px;color:#000;font-weight:400;letter-spacing:0.4px;-webkit-text-stroke:0.2px #000">91,011</div><div class="t" style="right:1547px;top:687.00px;font-size:20px;color:#000;font-weight:400;letter-spacing:0.4px;-webkit-text-stroke:0.2px #000">80,537</div><div class="t " style="left:39px;top:719.00px;font-size:20px;color:#000;font-weight:400;letter-spacing:-0.1px;-webkit-text-stroke:0.2px #000">Provision for income taxes</div><div class="t" style="right:2063px;top:719.00px;font-size:20px;color:#000;font-weight:400;letter-spacing:0.4px;-webkit-text-stroke:0.2px #000">5,553</div><div class="t" style="right:1895px;top:719.00px;font-size:20px;color:#000;font-weight:400;letter-spacing:0.4px;-webkit-text-stroke:0.2px #000">4,788</div><div class="t" style="right:1715px;top:719.00px;font-size:20px;color:#000;font-weight:400;letter-spacing:0.4px;-webkit-text-stroke:0.2px #000">16,412</div><div class="t" style="right:1547px;top:719.00px;font-size:20px;color:#000;font-weight:400;letter-spacing:0.4px;-webkit-text-stroke:0.2px #000">14,437</div><div class="t " style="left:39px;top:751.00px;font-size:20px;color:#000;font-weight:400;letter-spacing:-0.1px;-webkit-text-stroke:0.2px #000">Net income</div><div class="t" style="right:2063px;top:751.00px;font-size:20px;color:#000;font-weight:400;letter-spacing:0.4px;-webkit-text-stroke:0.2px #000">$ 25,824</div><div class="t" style="right:1895px;top:751.00px;font-size:20px;color:#000;font-weight:400;letter-spacing:0.4px;-webkit-text-stroke:0.2px #000">$ 21,939</div><div class="t" style="right:1715px;top:751.00px;font-size:20px;color:#000;font-weight:400;letter-spacing:0.4px;-webkit-text-stroke:0.2px #000">$ 74,599</div><div class="t" style="right:1547px;top:751.00px;font-size:20px;color:#000;font-weight:400;letter-spacing:0.4px;-webkit-text-stroke:0.2px #000">$ 66,100</div><div class="t " style="left:39px;top:783.00px;font-size:20px;color:#000;font-weight:400;letter-spacing:-0.1px;-webkit-text-stroke:0.2px #000"><b>Earnings per share:</b></div><div class="t " style="left:39px;top:815.00px;font-size:20px;color:#000;font-weight:400;letter-spacing:-0.1px;-webkit-text-stroke:0.2px #000">Basic</div><div class="t" style="right:2063px;top:815.00px;font-size:20px;color:#000;font-weight:400;letter-spacing:0.4px;-webkit-text-stroke:0.2px #000">$ 3.47</div><div class="t" style="right:1895px;top:815.00px;font-size:20px;color:#000;font-weight:400;letter-spacing:0.4px;-webkit-text-stroke:0.2px #000">$ 2.95</div><div class="t" style="right:1715px;top:815.00px;font-size:20px;color:#000;font-weight:400;letter-spacing:0.4px;-webkit-text-stroke:0.2px #000">$ 10.03</div><div class="t" style="right:1547px;top:815.00px;font-size:20px;color:#000;font-weight:400;letter-spacing:0.4px;-webkit-text-stroke:0.2px #000">$ 8.9</div><div class="t " style="left:39px;top:847.00px;font-size:20px;color:#000;font-weight:400;letter-spacing:-0.1px;-webkit-text-stroke:0.2px #000">Diluted</div><div class="t" style="right:2063px;top:847.00px;font-size:20px;color:#000;font-weight:400;letter-spacing:0.4px;-webkit-text-stroke:0.2px #000">$ 3.46</div><div class="t" style="right:1895px;top:847.00px;font-size:20px;color:#000;font-weight:400;letter-spacing:0.4px;-webkit-text-stroke:0.2px #000">$ 2.94</div><div class="t" style="right:1715px;top:847.00px;font-size:20px;color:#000;font-weight:400;letter-spacing:0.4px;-webkit-text-stroke:0.2px #000">$ 9.99</div><div class="t" style="right:1547px;top:847.00px;font-size:20px;color:#000;font-weight:400;letter-spacing:0.4px;-webkit-text-stroke:0.2px #000">$ 8.85</div><div class="t " style="left:39px;top:879.00px;font-size:20px;color:#000;font-weight:400;letter-spacing:-0.1px;-webkit-text-stroke:0.2px #000"><b>Weighted average shares outstanding:</b></div><div class="t " style="left:39px;top:911.00px;font-size:20px;color:#000;font-weight:400;letter-spacing:-0.1px;-webkit-text-stroke:0.2px #000">Basic</div><div class="t" style="right:2063px;top:911.00px;font-size:20px;color:#000;font-weight:400;letter-spacing:0.4px;-webkit-text-stroke:0.2px #000">7,434</div><div class="t" style="right:1895px;top:911.00px;font-size:20px;color:#000;font-weight:400;letter-spacing:0.4px;-webkit-text-stroke:0.2px #000">7,431</div><div class="t" style="right:1715px;top:911.00px;font-size:20px;color:#000;font-weight:400;letter-spacing:0.4px;-webkit-text-stroke:0.2px #000">7,434</div><div class="t" style="right:1547px;top:911.00px;font-size:20px;color:#000;font-weight:400;letter-spacing:0.4px;-webkit-text-stroke:0.2px #000">7,431</div><div class="t " style="left:39px;top:943.00px;font-size:20px;color:#000;font-weight:400;letter-spacing:-0.1px;-webkit-text-stroke:0.2px #000">Diluted</div><div class="t" style="right:2063px;top:943.00px;font-size:20px;color:#000;font-weight:400;letter-spacing:0.4px;-webkit-text-stroke:0.2px #000">7,461</div><div class="t" style="right:1895px;top:943.00px;font-size:20px;color:#000;font-weight:400;letter-spacing:0.4px;-webkit-text-stroke:0.2px #000">7,472</div><div class="t" style="right:1715px;top:943.00px;font-size:20px;color:#000;font-weight:400;letter-spacing:0.4px;-webkit-text-stroke:0.2px #000">7,466</div><div class="t" style="right:1547px;top:943.00px;font-size:20px;color:#000;font-weight:400;letter-spacing:0.4px;-webkit-text-stroke:0.2px #000">7,467</div><div class="t " style="left:39px;top:975.00px;font-size:20px;color:#000;font-weight:400;letter-spacing:-0.1px;-webkit-text-stroke:0.2px #000">Product</div><div class="t " style="left:39px;top:1007.00px;font-size:20px;color:#000;font-weight:400;letter-spacing:-0.1px;-webkit-text-stroke:0.2px #000">Revenue</div><div class="t" style="right:2063px;top:1007.00px;font-size:20px;color:#000;font-weight:400;letter-spacing:0.4px;-webkit-text-stroke:0.2px #000">$ 15,319</div><div class="t" style="right:1895px;top:1007.00px;font-size:20px;color:#000;font-weight:400;letter-spacing:0.4px;-webkit-text-stroke:0.2px #000">$ 17,080</div><div class="t" style="right:1715px;top:1007.00px;font-size:20px;color:#000;font-weight:400;letter-spacing:0.4px;-webkit-text-stroke:0.2px #000">$ 46,810</div><div class="t" style="right:1547px;top:1007.00px;font-size:20px;color:#000;font-weight:400;letter-spacing:0.4px;-webkit-text-stroke:0.2px #000">$ 51,556</div><div class="t " style="left:39px;top:1039.00px;font-size:20px;color:#000;font-weight:400;letter-spacing:-0.1px;-webkit-text-stroke:0.2px #000">Cost of revenue</div><div class="t" style="right:2063px;top:1039.00px;font-size:20px;color:#000;font-weight:400;letter-spacing:0.4px;-webkit-text-stroke:0.2px #000">3,037</div><div class="t" style="right:1895px;top:1039.00px;font-size:20px;color:#000;font-weight:400;letter-spacing:0.4px;-webkit-text-stroke:0.2px #000">4,339</div><div class="t" style="right:1715px;top:1039.00px;font-size:20px;color:#000;font-weight:400;letter-spacing:0.4px;-webkit-text-stroke:0.2px #000">10,187</div><div class="t" style="right:1547px;top:1039.00px;font-size:20px;color:#000;font-weight:400;letter-spacing:0.4px;-webkit-text-stroke:0.2px #000">13,834</div><div class="t " style="left:39px;top:1071.00px;font-size:20px;color:#000;font-weight:400;letter-spacing:-0.1px;-webkit-text-stroke:0.2px #000">Service and Other</div><div class="t " style="left:39px;top:1103.00px;font-size:20px;color:#000;font-weight:400;letter-spacing:-0.1px;-webkit-text-stroke:0.2px #000">Revenue</div><div class="t" style="right:2063px;top:1103.00px;font-size:20px;color:#000;font-weight:400;letter-spacing:0.4px;-webkit-text-stroke:0.2px #000">54,747</div><div class="t" style="right:1895px;top:1103.00px;font-size:20px;color:#000;font-weight:400;letter-spacing:0.4px;-webkit-text-stroke:0.2px #000">44,778</div><div class="t" style="right:1715px;top:1103.00px;font-size:20px;color:#000;font-weight:400;letter-spacing:0.4px;-webkit-text-stroke:0.2px #000">158,473</div><div class="t" style="right:1547px;top:1103.00px;font-size:20px;color:#000;font-weight:400;letter-spacing:0.4px;-webkit-text-stroke:0.2px #000">128,839</div><div class="t " style="left:39px;top:1135.00px;font-size:20px;color:#000;font-weight:400;letter-spacing:-0.1px;-webkit-text-stroke:0.2px #000">Cost of revenue</div><div class="t" style="right:2063px;top:1135.00px;font-size:20px;color:#000;font-weight:400;letter-spacing:0.4px;-webkit-text-stroke:0.2px #000">$ 18,882</div><div class="t" style="right:1895px;top:1135.00px;font-size:20px;color:#000;font-weight:400;letter-spacing:0.4px;-webkit-text-stroke:0.2px #000">$ 14,166</div><div class="t" style="right:1715px;top:1135.00px;font-size:20px;color:#000;font-weight:400;letter-spacing:0.4px;-webkit-text-stroke:0.2px #000">$ 53,630</div><div class="t" style="right:1547px;top:1135.00px;font-size:20px;color:#000;font-weight:400;letter-spacing:0.4px;-webkit-text-stroke:0.2px #000">$ 40,596</div><div class="r" style="left:0px;top:0px;width:3010px;height:52px;background:#387a4b"></div><svg class="r" style="left:0px;top:0px;" width="3010" height="52" viewBox="0 0 3010 52"><circle cx="28" cy="20" r="12.2" fill="#ee6a5f" stroke="#d0584d" stroke-width="0.8"/><circle cx="68" cy="20" r="12.2" fill="#f5bd4f" stroke="#d6a13c" stroke-width="0.8"/><circle cx="108" cy="20" r="12.2" fill="#61c454" stroke="#4ea43f" stroke-width="0.8"/><path d="M194 5.5 L181.3 17 V32.2 H189.7 V23 H198.3 V32.2 H206.7 V17 Z" fill="none" stroke="#fff" stroke-width="2" stroke-linejoin="round"/><path d="M237.5 7.3 H257 L260.4 10.8 V30 Q260.4 32.3 258 32.3 H237.5 Q235.8 32.3 235.8 30 V9.5 Q235.8 7.3 237.5 7.3 Z" fill="none" stroke="#8dbf98" stroke-width="1.9"/><path d="M241.8 7.3 V13 Q241.8 14.3 243.3 14.3 H250.5 Q252 14.3 252 13 V7.3" fill="none" stroke="#8dbf98" stroke-width="1.9"/><path d="M239.8 32.3 V23.5 Q239.8 22.2 241.3 22.2 H254.8 Q256.3 22.2 256.3 23.5 V32.3" fill="none" stroke="#8dbf98" stroke-width="1.9"/><path d="M291 4.2 V15.2 H301.8" fill="none" stroke="#8dbf98" stroke-width="1.9"/><path d="M291.5 14.7 L300 7.5 Q306 3.5 311 6.5 Q316 10 314 16 Q312.5 19 309 22 L295 35.5" fill="none" stroke="#8dbf98" stroke-width="1.9"/><polyline points="335.6,17.5 340.0,23.5 344.4,17.5" fill="none" stroke="#8dbf98" stroke-width="1.9" stroke-linecap="round" stroke-linejoin="round"/><path d="M394.9 18.5 A13 13 0 1 1 386.5 7.5" fill="none" stroke="#fff" stroke-width="2"/><path d="M386 13.3 H393.3 V6" fill="none" stroke="#fff" stroke-width="2"/><circle cx="426" cy="20" r="2.7" fill="#fff"/><circle cx="436" cy="20" r="2.7" fill="#fff"/><circle cx="446" cy="20" r="2.7" fill="#fff"/><path d="M1348.6 4.8 H1361 L1371.1 13.7 V34 H1348.6 Z" fill="#fff" stroke="#2c5e3a" stroke-width="0.8"/><rect x="1345.4" y="12.5" width="14.3" height="14.1" rx="2" fill="#3c8052"/><path d="M1349.2 15.3 L1355.6 23.8 M1355.6 15.3 L1349.2 23.8" stroke="#fff" stroke-width="1.5"/><rect x="1361.2" y="16.3" width="2.8" height="2" fill="#3f8c5a"/><rect x="1365.2" y="16.3" width="2.8" height="2" fill="#3f8c5a"/><rect x="1361.2" y="19.3" width="2.8" height="2" fill="#44705a"/><rect x="1365.2" y="19.3" width="2.8" height="2" fill="#44705a"/><rect x="1361.2" y="22.3" width="2.8" height="2" fill="#0e2a1a"/><rect x="1365.2" y="22.3" width="2.8" height="2" fill="#0e2a1a"/><rect x="2371" y="-12" width="558" height="52" rx="10" fill="#3a7d4e" stroke="#4b8b5d" stroke-width="1.2"/><circle cx="2395" cy="19" r="9" fill="none" stroke="#a9cdb1" stroke-width="2.1"/><path d="M2401.5 25.5 L2408.5 32.5" stroke="#a9cdb1" stroke-width="2.3" stroke-linecap="round"/><circle cx="2967.8" cy="16.5" r="4.4" fill="none" stroke="#fff" stroke-width="2"/><path d="M2960 25.3 H2976 Q2977 25.3 2977 27 Q2976 34 2968 34.1 Q2960 34 2959 27 Q2959 25.3 2960 25.3 Z" fill="none" stroke="#fff" stroke-width="2"/><path d="M2977.5 5.3 H2986.5 Q2989 5.3 2989 8 V12.3 Q2989 15 2986.5 15 H2982.5 L2979 19.5 L2978.5 15 Q2975.8 14.5 2975.8 12.3 V8 Q2975.8 5.3 2977.5 5.3 Z" fill="none" stroke="#fff" stroke-width="1.9" stroke-linejoin="round"/></svg><div class="t " style="left:1380.5px;top:7.55px;font-size:27px;color:#fff;font-weight:700;;letter-spacing:0.225px">Financial_Report (10)</div><div class="t " style="left:2424px;top:8.82px;font-size:25.5px;color:#a9cdb1;font-weight:700;;letter-spacing:-0.227px">Search (Cmd + Ctrl + U)</div><div class="r" style="left:0px;top:52px;width:3010px;height:208px;background:linear-gradient(#f7f7f7 0px,#f3f3f3 60px,#f0f0f0 208px)"></div><div class="r" style="left:0px;top:52px;width:3010px;height:1px;background:#fdfdfd"></div><div class="r" style="left:0px;top:260px;width:3010px;height:2px;background:#c9c9c9"></div><div class="t " style="left:11px;top:67.97px;font-size:26.5px;color:#222;font-weight:700;;letter-spacing:1.000px">Home</div><div class="r" style="left:12px;top:102px;width:76px;height:6px;background:#3b7b4e;border-radius:3px"></div><div class="t " style="left:133px;top:68.07px;font-size:26.5px;color:#222;font-weight:400;-webkit-text-stroke:0.35px #222;letter-spacing:1.200px">Insert</div><div class="t " style="left:255.5px;top:68.07px;font-size:26.5px;color:#222;font-weight:400;-webkit-text-stroke:0.35px #222;letter-spacing:0.350px">Page Layout</div><div class="t " style="left:459px;top:68.07px;font-size:26.5px;color:#222;font-weight:400;-webkit-text-stroke:0.35px #222;letter-spacing:0.714px">Formulas</div><div class="t " style="left:624.2px;top:68.07px;font-size:26.5px;color:#222;font-weight:400;-webkit-text-stroke:0.35px #222;letter-spacing:0.767px">Data</div><div class="t " style="left:729px;top:68.07px;font-size:26.5px;color:#222;font-weight:400;-webkit-text-stroke:0.35px #222;letter-spacing:0.460px">Review</div><div class="t " style="left:867px;top:68.07px;font-size:26.5px;color:#222;font-weight:400;-webkit-text-stroke:0.35px #222;letter-spacing:0.600px">View</div><div class="r" style="left:2861px;top:60.5px;width:133px;height:47px;background:#fff;border:1.5px solid #cfcfcf;border-radius:8px;box-sizing:border-box"></div><div class="t " style="left:2913px;top:73.17px;font-size:24.5px;color:#3b7b4e;font-weight:700;;letter-spacing:0.000px">Share</div><svg class="r" style="left:0px;top:52px;" width="3010" height="210" viewBox="0 0 3010 210"><defs><linearGradient id="btng" x1="0" y1="0" x2="0" y2="1"><stop offset="0" stop-color="#c9c9c9"/><stop offset="1" stop-color="#bdbdbd"/></linearGradient></defs><g transform="translate(0,-52)"><rect x="264" y="120" width="2" height="124" fill="#d3d3d3"/><rect x="804" y="120" width="2" height="124" fill="#d3d3d3"/><rect x="1128" y="120" width="2" height="124" fill="#d3d3d3"/><rect x="1406" y="120" width="2" height="124" fill="#d3d3d3"/><rect x="1758" y="120" width="2" height="124" fill="#d3d3d3"/><rect x="2121.5" y="120" width="2" height="124" fill="#d3d3d3"/><rect x="2460" y="120" width="2" height="124" fill="#d3d3d3"/><rect x="2874" y="120" width="2" height="124" fill="#d3d3d3"/><rect x="478" y="200" width="2" height="35" fill="#d3d3d3"/><rect x="584" y="200" width="2" height="35" fill="#d3d3d3"/><rect x="994" y="136" width="2" height="35" fill="#d3d3d3"/><rect x="994" y="200" width="2" height="35" fill="#d3d3d3"/><rect x="1619" y="200" width="2" height="35" fill="#d3d3d3"/><rect x="25" y="139" width="40.2" height="46.2" fill="#f2d98e" stroke="#e2913c" stroke-width="1.6"/><rect x="30.5" y="143" width="29.5" height="38" fill="#f7f7f7"/><path d="M32.8 137.2 H39 Q39.5 130.5 45 130.5 Q50.5 130.5 51 137.2 H57.2 V145.2 H32.8 Z" fill="#f7f7f7" stroke="#787878" stroke-width="1.6"/><rect x="50.9" y="154.8" width="26.3" height="34.2" fill="#f8f8f8" stroke="#333" stroke-width="1.7"/><polyline points="89.2,156.2 94.0,161.8 98.8,156.2" fill="none" stroke="#333" stroke-width="2.6" stroke-linecap="round" stroke-linejoin="round"/><path d="M126.6 126.5 L137.3 150.3 M137.8 126.5 L127 150.3" stroke="#333" stroke-width="1.3" fill="none"/><circle cx="126.2" cy="153.8" r="3.3" fill="#f4f8fc" stroke="#3d87cb" stroke-width="1.7"/><circle cx="138.1" cy="153.8" r="3.3" fill="#f4f8fc" stroke="#3d87cb" stroke-width="1.7"/><path d="M126.5 197.2 H117.3 V171.5 H128.8 L131.3 174" fill="none" stroke="#333" stroke-width="1.7"/><path d="M129.6 177.7 H138.8 L146.7 184.5 V200.6 H129.6 Z" fill="#f7f7f7" stroke="#333" stroke-width="1.7"/><path d="M138.8 177.7 V184.5 H146.7" fill="none" stroke="#333" stroke-width="1.5"/><path d="M134.6 191 H141.7 M134.6 194.8 H141.7" stroke="#666" stroke-width="1.3"/><polyline points="225.5,183.5 230.0,189.5 234.5,183.5" fill="none" stroke="#333" stroke-width="2.6" stroke-linecap="round" stroke-linejoin="round"/><path d="M117.5 228.5 Q124 222.5 131.5 222 L139.5 230 Q135.5 237 129.5 243 Z" fill="#fbe3b8" stroke="#e2913c" stroke-width="1.7" stroke-linejoin="round"/><path d="M121.5 233 L136 235.5" stroke="#e2913c" stroke-width="1.4"/><path d="M131 221 L135 217 L143.3 225.3 L139.3 229.3 Z" fill="#f7f7f7" stroke="#333" stroke-width="1.7" stroke-linejoin="round"/><path d="M138.5 220.5 L145 214 Q147 212.5 148.3 214 Q149.5 215.5 148 217.2 L141.5 223.5" fill="#f7f7f7" stroke="#333" stroke-width="1.7" stroke-linejoin="round"/><rect x="286.5" y="130.5" width="281" height="47" rx="6" fill="#fff" stroke="#c9c9c9" stroke-width="1.3"/><polyline points="548,151 553.0,158 558,151" fill="none" stroke="#333" stroke-width="2.5" stroke-linecap="round" stroke-linejoin="round"/><rect x="573" y="130.5" width="106.5" height="47" rx="6" fill="#fff" stroke="#c9c9c9" stroke-width="1.3"/><polyline points="660,151 665.0,158 670,151" fill="none" stroke="#333" stroke-width="2.5" stroke-linecap="round" stroke-linejoin="round"/><polyline points="715.5,145.5 719.5,141.3 723.5,145.5" fill="none" stroke="#3d87cb" stroke-width="1.8"/><polyline points="766.5,141.5 770.5,145.5 774.5,141.5" fill="none" stroke="#3d87cb" stroke-width="1.8"/><rect x="286.2" y="194.2" width="47.8" height="47.8" rx="5.5" fill="url(#btng)"/><path d="M404.6 228.9 H422" stroke="#333" stroke-width="2"/><polyline points="444.9,215.8 449.85,222.1 454.8,215.8" fill="none" stroke="#333" stroke-width="2.6" stroke-linecap="round" stroke-linejoin="round"/><rect x="502.70" y="201.20" width="2.2" height="2.2" fill="#222"/><rect x="502.70" y="215.80" width="2.2" height="2.2" fill="#222"/><rect x="502.70" y="201.20" width="2.2" height="2.2" fill="#222"/><rect x="517.90" y="201.20" width="2.2" height="2.2" fill="#222"/><rect x="533.10" y="201.20" width="2.2" height="2.2" fill="#222"/><rect x="507.77" y="201.20" width="2.2" height="2.2" fill="#222"/><rect x="507.77" y="215.80" width="2.2" height="2.2" fill="#222"/><rect x="502.70" y="205.47" width="2.2" height="2.2" fill="#222"/><rect x="517.90" y="205.47" width="2.2" height="2.2" fill="#222"/><rect x="533.10" y="205.47" width="2.2" height="2.2" fill="#222"/><rect x="512.83" y="201.20" width="2.2" height="2.2" fill="#222"/><rect x="512.83" y="215.80" width="2.2" height="2.2" fill="#222"/><rect x="502.70" y="209.73" width="2.2" height="2.2" fill="#222"/><rect x="517.90" y="209.73" width="2.2" height="2.2" fill="#222"/><rect x="533.10" y="209.73" width="2.2" height="2.2" fill="#222"/><rect x="517.90" y="201.20" width="2.2" height="2.2" fill="#222"/><rect x="517.90" y="215.80" width="2.2" height="2.2" fill="#222"/><rect x="502.70" y="214.00" width="2.2" height="2.2" fill="#222"/><rect x="517.90" y="214.00" width="2.2" height="2.2" fill="#222"/><rect x="533.10" y="214.00" width="2.2" height="2.2" fill="#222"/><rect x="522.97" y="201.20" width="2.2" height="2.2" fill="#222"/><rect x="522.97" y="215.80" width="2.2" height="2.2" fill="#222"/><rect x="502.70" y="218.27" width="2.2" height="2.2" fill="#222"/><rect x="517.90" y="218.27" width="2.2" height="2.2" fill="#222"/><rect x="533.10" y="218.27" width="2.2" height="2.2" fill="#222"/><rect x="528.03" y="201.20" width="2.2" height="2.2" fill="#222"/><rect x="528.03" y="215.80" width="2.2" height="2.2" fill="#222"/><rect x="502.70" y="222.53" width="2.2" height="2.2" fill="#222"/><rect x="517.90" y="222.53" width="2.2" height="2.2" fill="#222"/><rect x="533.10" y="222.53" width="2.2" height="2.2" fill="#222"/><rect x="533.10" y="201.20" width="2.2" height="2.2" fill="#222"/><rect x="533.10" y="215.80" width="2.2" height="2.2" fill="#222"/><rect x="502.70" y="226.80" width="2.2" height="2.2" fill="#222"/><rect x="517.90" y="226.80" width="2.2" height="2.2" fill="#222"/><rect x="533.10" y="226.80" width="2.2" height="2.2" fill="#222"/><path d="M503.5 231 H534.5" stroke="#111" stroke-width="2.2"/><polyline points="551,215.5 556.0,222 561,215.5" fill="none" stroke="#333" stroke-width="2.6" stroke-linecap="round" stroke-linejoin="round"/><path d="M615.5 215.3 L624.8 205.3 L635.5 213.5 L624.5 224 Z" fill="#fafafa" stroke="#333" stroke-width="1.7" stroke-linejoin="round"/><path d="M624.5 205.5 V204 Q624.5 202.3 626.6 202.3 Q628.7 202.3 628.7 204 V212.5" fill="none" stroke="#333" stroke-width="1.6"/><path d="M633.5 211.5 Q635.5 208.3 637.5 210 Q639.3 212.5 638.3 221 Q637.5 215 634.5 213.5 Z" fill="#2c63a8" stroke="#2c63a8" stroke-width="1.3"/><rect x="610" y="226" width="32" height="8" fill="#fbf94e"/><polyline points="657,215.5 662.0,222 667,215.5" fill="none" stroke="#333" stroke-width="2.6" stroke-linecap="round" stroke-linejoin="round"/><rect x="686" y="226" width="32" height="8" fill="#e8302a"/><polyline points="733,215.5 738.0,222 743,215.5" fill="none" stroke="#333" stroke-width="2.6" stroke-linecap="round" stroke-linejoin="round"/><rect x="878" y="130" width="47.5" height="47.5" rx="6" fill="url(#btng)"/><rect x="878" y="194.5" width="47.5" height="47.5" rx="6" fill="url(#btng)"/><rect x="836.0" y="137.9" width="28" height="2.2" fill="#333"/><rect x="840.0" y="145.9" width="20" height="2.2" fill="#333"/><rect x="836.0" y="153.9" width="28" height="2.2" fill="#333"/><rect x="888.0" y="143.4" width="28" height="2.2" fill="#333"/><rect x="892.0" y="151.4" width="20" height="2.2" fill="#333"/><rect x="888.0" y="159.9" width="28" height="2.2" fill="#333"/><rect x="940.0" y="151.4" width="28" height="2.2" fill="#333"/><rect x="944.0" y="159.9" width="20" height="2.2" fill="#333"/><rect x="940.0" y="167.9" width="28" height="2.2" fill="#333"/><rect x="836" y="203.4" width="28" height="2.2" fill="#333"/><rect x="836" y="211.4" width="20" height="2.2" fill="#333"/><rect x="836" y="219.9" width="28" height="2.2" fill="#333"/><rect x="836" y="227.9" width="20" height="2.2" fill="#333"/><rect x="888.0" y="203.4" width="28" height="2.2" fill="#333"/><rect x="892.0" y="211.4" width="20" height="2.2" fill="#333"/><rect x="888.0" y="219.9" width="28" height="2.2" fill="#333"/><rect x="892.0" y="227.9" width="20" height="2.2" fill="#333"/><rect x="940" y="203.4" width="28" height="2.2" fill="#333"/><rect x="948" y="211.4" width="20" height="2.2" fill="#333"/><rect x="940" y="219.9" width="28" height="2.2" fill="#333"/><rect x="948" y="227.9" width="20" height="2.2" fill="#333"/><rect x="1022" y="203.4" width="28" height="2.2" fill="#333"/><rect x="1022" y="227.9" width="28" height="2.2" fill="#333"/><rect x="1039" y="211.4" width="11" height="2.2" fill="#333"/><rect x="1039" y="219.9" width="11" height="2.2" fill="#333"/><path d="M1037.5 216.8 H1023.5 M1028 212.3 L1023.3 216.8 L1028 221.3" fill="none" stroke="#3d87cb" stroke-width="1.8"/><rect x="1074" y="203.4" width="28" height="2.2" fill="#333"/><rect x="1074" y="227.9" width="28" height="2.2" fill="#333"/><rect x="1091" y="211.4" width="11" height="2.2" fill="#333"/><rect x="1091" y="219.9" width="11" height="2.2" fill="#333"/><path d="M1074 216.8 H1088 M1083.5 212.3 L1088.2 216.8 L1083.5 221.3" fill="none" stroke="#3d87cb" stroke-width="1.8"/><path d="M1031 167 L1051 146" stroke="#3d87cb" stroke-width="1.8"/><polyline points="1043,146.5 1051.5,145.5 1051,154" fill="none" stroke="#3d87cb" stroke-width="1.8"/><polyline points="1067,152 1072.0,158 1077,152" fill="none" stroke="#333" stroke-width="2.6" stroke-linecap="round" stroke-linejoin="round"/><rect x="1146" y="130" width="181.5" height="47.5" rx="6" fill="#e2e2e2"/><path d="M1152 130 H1304 V177.5 H1152 Q1146 177.5 1146 171.5 V136 Q1146 130 1152 130 Z" fill="url(#btng)"/><polyline points="1311,152 1316.0,158 1321,152" fill="none" stroke="#333" stroke-width="2.6" stroke-linecap="round" stroke-linejoin="round"/><path d="M1181 155 Q1186 156 1185.5 161 Q1185 166 1178 166.5 H1171" fill="none" stroke="#3d87cb" stroke-width="1.8"/><polyline points="1175,162 1170.5,166.5 1175,171" fill="none" stroke="#3d87cb" stroke-width="1.8"/><rect x="1146" y="194.5" width="238.5" height="47.5" rx="6" fill="#e2e2e2"/><path d="M1152 194.5 H1361 V242 H1152 Q1146 242 1146 236 V200.5 Q1146 194.5 1152 194.5 Z" fill="url(#btng)"/><polyline points="1368.5,215.5 1373.5,222 1378.5,215.5" fill="none" stroke="#333" stroke-width="2.6" stroke-linecap="round" stroke-linejoin="round"/><rect x="1155" y="203.5" width="28" height="27" fill="#fafafa" stroke="#222" stroke-width="1.8"/><path d="M1155 209 H1183 M1155 225 H1183 M1169 203.5 V209 M1169 225 V230.5" stroke="#222" stroke-width="1.6"/><rect x="1155.8" y="209.8" width="26.4" height="14.4" fill="#fafafa" stroke="#3d87cb" stroke-width="1.5"/><path d="M1160 217 H1178 M1163.5 213.5 L1160 217 L1163.5 220.5 M1174.5 213.5 L1178 217 L1174.5 220.5" fill="none" stroke="#3d87cb" stroke-width="1.6"/><rect x="1428" y="130.5" width="309" height="47" rx="6" fill="#fff" stroke="#c9c9c9" stroke-width="1.3"/><polyline points="1717,151 1722.0,158 1727,151" fill="none" stroke="#333" stroke-width="2.5" stroke-linecap="round" stroke-linejoin="round"/><polyline points="1482,215.5 1487.0,222 1492,215.5" fill="none" stroke="#333" stroke-width="2.6" stroke-linecap="round" stroke-linejoin="round"/><rect x="1800" y="137" width="54.5" height="42.5" fill="#fafafa"/><rect x="1809" y="137" width="25.5" height="13.8" fill="#f4a0a0" stroke="#cf3b30" stroke-width="1.5"/><rect x="1809" y="151" width="17.3" height="13.8" fill="#8db8e8" stroke="#2b68b5" stroke-width="1.5"/><rect x="1809" y="165" width="29.5" height="14.3" fill="#f4a0a0" stroke="#cf3b30" stroke-width="1.5"/><path d="M1800 150.6 H1809 M1834.5 150.6 H1854.5 M1800 164.9 H1809 M1826.3 164.9 H1854.5 M1844.2 137 V179.5 M1826.3 151 V164.9" stroke="#6b6b6b" stroke-width="1.4"/><rect x="1800" y="137" width="54.5" height="42.5" fill="none" stroke="#333" stroke-width="1.8"/><polyline points="1870.2,156.4 1875.1,161.9 1880,156.4" fill="none" stroke="#333" stroke-width="2.6" stroke-linecap="round" stroke-linejoin="round"/><rect x="1915" y="137" width="54.5" height="42.5" fill="#fafafa" stroke="#333" stroke-width="1.8"/><rect x="1933" y="150.8" width="36.5" height="28.7" fill="#8db8e8" stroke="#2b68b5" stroke-width="1.7"/><path d="M1915 150.6 H1933 M1915 164.9 H1933 M1932.9 137 V150.6 M1951.3 137 V150.6" stroke="#6b6b6b" stroke-width="1.4"/><path d="M1933 164.9 H1969.5 M1951.3 150.8 V179.5" stroke="#2b68b5" stroke-width="1.5"/><g transform="translate(0,0)"><path d="M1946.5 174.5 L1969.5 151 Q1972.5 148.5 1973.3 150.5 Q1974 152.5 1971.5 155.5 L1950.8 178.8 Z" fill="#fafafa" stroke="#f0f0f0" stroke-width="3.5"/><path d="M1946.5 174.5 L1969.5 151 Q1972.5 148.5 1973.3 150.5 Q1974 152.5 1971.5 155.5 L1950.8 178.8 Z" fill="#fafafa" stroke="#333" stroke-width="1.6" stroke-linejoin="round"/><path d="M1929.5 188.5 Q1936.5 186.5 1939 182 Q1941.5 175 1946 174.3 Q1951.5 174.5 1951.3 180 Q1950.5 187 1942 189 Q1935 190.3 1929.5 188.5 Z" fill="#8db8e8" stroke="#2b68b5" stroke-width="1.7" stroke-linejoin="round"/></g><polyline points="1985,156.4 1990.0,161.9 1995,156.4" fill="none" stroke="#333" stroke-width="2.6" stroke-linecap="round" stroke-linejoin="round"/><rect x="2015" y="137" width="54.5" height="42.5" fill="#fafafa" stroke="#333" stroke-width="1.8"/><path d="M2015 146.8 H2069.5 M2015 169 H2069.5 M2025.1 137 V179.5 M2058.8 137 V179.5" stroke="#6b6b6b" stroke-width="1.4"/><rect x="2025.3" y="147" width="33.5" height="22" fill="#8db8e8" stroke="#2b68b5" stroke-width="1.8"/><g transform="translate(100,0)"><path d="M1946.5 174.5 L1969.5 151 Q1972.5 148.5 1973.3 150.5 Q1974 152.5 1971.5 155.5 L1950.8 178.8 Z" fill="#fafafa" stroke="#f0f0f0" stroke-width="3.5"/><path d="M1946.5 174.5 L1969.5 151 Q1972.5 148.5 1973.3 150.5 Q1974 152.5 1971.5 155.5 L1950.8 178.8 Z" fill="#fafafa" stroke="#333" stroke-width="1.6" stroke-linejoin="round"/><path d="M1929.5 188.5 Q1936.5 186.5 1939 182 Q1941.5 175 1946 174.3 Q1951.5 174.5 1951.3 180 Q1950.5 187 1942 189 Q1935 190.3 1929.5 188.5 Z" fill="#8db8e8" stroke="#2b68b5" stroke-width="1.7" stroke-linejoin="round"/></g><polyline points="2085,156.4 2090.0,161.9 2095,156.4" fill="none" stroke="#333" stroke-width="2.6" stroke-linecap="round" stroke-linejoin="round"/><rect x="2153" y="137.3" width="54.5" height="41.5" fill="#fafafa" stroke="#333" stroke-width="1.8"/><path d="M2171.2 137.3 V179 M2189 137.3 V179" stroke="#6b6b6b" stroke-width="1.4"/><rect x="2161" y="151" width="50" height="14" fill="#8db8e8" stroke="#2b68b5" stroke-width="1.7"/><path d="M2175 151 V165 M2193 151 V165" stroke="#2b68b5" stroke-width="1.5"/><rect x="2150" y="155" width="24" height="4" fill="#f4f4f4"/><path d="M2150 154.6 H2174 M2150 158.8 H2174" stroke="#3d87cb" stroke-width="1.5"/><polyline points="2162,144.6 2149.5,156.7 2162,169.2" fill="none" stroke="#3d87cb" stroke-width="1.8"/><polyline points="2223,156 2228.0,161.3 2233,156" fill="none" stroke="#333" stroke-width="2.6" stroke-linecap="round" stroke-linejoin="round"/><path d="M2253 150.7 V137.3 H2307.5 V147 M2307.5 168 V179 H2253 V165.2" fill="#fafafa" stroke="#333" stroke-width="1.8"/><path d="M2271.5 137.3 V150.7 M2289.3 137.3 V150.7 M2271.5 165.2 V179 M2289.3 165.2 V179" stroke="#6b6b6b" stroke-width="1.4"/><path d="M2260.5 150.8 H2285.5 L2293 158 L2285.5 165.2 H2260.5 Z" fill="#8db8e8" stroke="#2b68b5" stroke-width="1.7"/><path d="M2278.5 150.8 V165.2" stroke="#2b68b5" stroke-width="1.5"/><path d="M2288.3 148 L2309.5 169.5 M2309.5 148 L2288.3 169.5" stroke="#d9534a" stroke-width="1.8"/><polyline points="2323,156 2328.0,161.3 2333,156" fill="none" stroke="#333" stroke-width="2.6" stroke-linecap="round" stroke-linejoin="round"/><rect x="2353" y="137.3" width="54.5" height="41.5" fill="#fafafa" stroke="#333" stroke-width="1.8"/><path d="M2353 151.2 H2407.5 M2353 165 H2407.5 M2366.8 137.3 V179 M2393 137.3 V179" stroke="#6b6b6b" stroke-width="1.4"/><rect x="2367" y="151.3" width="26" height="13.7" fill="#8db8e8" stroke="#2b68b5" stroke-width="1.8"/><path d="M2364.5 128.9 H2395.5 M2364.5 125.8 V132 M2395.5 125.8 V132" stroke="#3d87cb" stroke-width="1.6"/><polyline points="2423,156 2428.0,161.3 2433,156" fill="none" stroke="#333" stroke-width="2.6" stroke-linecap="round" stroke-linejoin="round"/><path d="M2516.1 132 V128.5 H2492.6 L2504.3 141.9 L2492.6 155.5 H2516.1 V152" fill="none" stroke="#333" stroke-width="1.7"/><polyline points="2636.3,140.1 2641.0,145.3 2645.7,140.1" fill="none" stroke="#333" stroke-width="2.6" stroke-linecap="round" stroke-linejoin="round"/><rect x="2489.3" y="173.4" width="29.6" height="25.3" fill="#fafafa" stroke="#333" stroke-width="1.7"/><path d="M2489.3 177 H2518.9" stroke="#333" stroke-width="1.7"/><path d="M2502.9 180.4 V195 M2496.3 188.5 L2502.9 195 L2509.5 188.5" fill="none" stroke="#3d87cb" stroke-width="1.7"/><polyline points="2574.4,184.2 2579.05,189.7 2583.7,184.2" fill="none" stroke="#333" stroke-width="2.6" stroke-linecap="round" stroke-linejoin="round"/><path d="M2507.3 215.8 L2518.2 225.8 L2499.1 244 L2489 234 Z" fill="#fafafa" stroke="#9a4db6" stroke-width="1.7" stroke-linejoin="round"/><path d="M2489 234 L2495.5 227.8 L2505.5 237.8 L2499.1 244 Z" fill="#d7a3e6" stroke="#9a4db6" stroke-width="1.7" stroke-linejoin="round"/><polyline points="2598.1,227.8 2603.05,233.5 2608,227.8" fill="none" stroke="#333" stroke-width="2.6" stroke-linecap="round" stroke-linejoin="round"/><path d="M2665.8 155.8 L2675 132.3 L2684.2 155.8 M2669 147.5 H2681" fill="none" stroke="#3d87cb" stroke-width="1.8"/><path d="M2666.5 161 H2682 L2666 183 H2682.5" fill="none" stroke="#333" stroke-width="1.8"/><path d="M2690 144.8 H2720.5 V149.6 L2708.3 160.2 V175.2 H2701.7 V160.2 L2690 149.6 Z" fill="#fafafa" stroke="#333" stroke-width="1.7" stroke-linejoin="round"/><polyline points="2736,156 2741.0,162 2746,156" fill="none" stroke="#333" stroke-width="2.6" stroke-linecap="round" stroke-linejoin="round"/><circle cx="2800" cy="151" r="19.7" fill="#f7f7f7" stroke="#333" stroke-width="1.7"/><path d="M2785 166.5 L2763.5 187.8" stroke="#333" stroke-width="1.7"/><polyline points="2836.5,156.1 2841.15,161.3 2845.8,156.1" fill="none" stroke="#333" stroke-width="2.6" stroke-linecap="round" stroke-linejoin="round"/><rect x="2909.4" y="130.2" width="55.5" height="55.2" fill="none" stroke="#c95a3b" stroke-width="1.7"/><rect x="2914.4" y="135.1" width="20.4" height="20.4" fill="none" stroke="#c95a3b" stroke-width="1.7"/><rect x="2914.4" y="161.2" width="20.4" height="20.4" fill="none" stroke="#c95a3b" stroke-width="1.7"/><rect x="2939.9" y="135.1" width="20.4" height="20.4" fill="none" stroke="#c95a3b" stroke-width="1.7"/><rect x="2939.9" y="161.2" width="20.4" height="20.4" fill="none" stroke="#c95a3b" stroke-width="1.7"/><ellipse cx="1518.1" cy="211.2" rx="4.9" ry="5.9" fill="none" stroke="#333" stroke-width="1.7"/><ellipse cx="1535.2" cy="225" rx="4.9" ry="5.9" fill="none" stroke="#333" stroke-width="1.7"/><path d="M1536.2 204 L1517.1 231.7" stroke="#333" stroke-width="1.8"/><circle cx="1579.6" cy="212.3" r="6.3" fill="#333"/><path d="M1585.7 210.5 Q1588.5 219 1584 224.5 Q1580 229 1574.3 230.6 L1574 229.3 Q1579 226 1580.5 218.5 Z" fill="#333"/><ellipse cx="1671" cy="208.8" rx="3.5" ry="5.9" fill="none" stroke="#222" stroke-width="1.7"/><circle cx="1662" cy="214.4" r="1.2" fill="#222"/><ellipse cx="1660.9" cy="225" rx="3.5" ry="5.9" fill="none" stroke="#222" stroke-width="1.7"/><ellipse cx="1670.7" cy="225" rx="3.5" ry="5.9" fill="none" stroke="#222" stroke-width="1.7"/><circle cx="1651.8" cy="230.6" r="1.2" fill="#222"/><path d="M1662.9 210.7 H1646 M1653.3 204.2 L1645.8 210.7 L1653.3 217.2" fill="none" stroke="#3d87cb" stroke-width="1.9"/><ellipse cx="1713.3" cy="208.8" rx="3.5" ry="5.9" fill="none" stroke="#222" stroke-width="1.7"/><ellipse cx="1722.9" cy="208.8" rx="3.5" ry="5.9" fill="none" stroke="#222" stroke-width="1.7"/><circle cx="1704.3" cy="214.4" r="1.2" fill="#222"/><ellipse cx="1722.9" cy="225" rx="3.5" ry="5.9" fill="none" stroke="#222" stroke-width="1.7"/><circle cx="1714.5" cy="230.6" r="1.2" fill="#222"/><path d="M1697.1 225 H1714 M1707.1 218.5 L1714.6 225 L1707.1 231.5" fill="none" stroke="#3d87cb" stroke-width="1.9"/></g></svg><div class="t " style="left:29.5px;top:200.03px;font-size:21.5px;color:#111;font-weight:400;-webkit-text-stroke:0.35px #111;letter-spacing:0.375px">Paste</div><div class="t " style="left:160px;top:132.32px;font-size:21.5px;color:#111;font-weight:400;-webkit-text-stroke:0.35px #111;letter-spacing:0.250px">Cut</div><div class="t " style="left:160px;top:176.82px;font-size:21.5px;color:#111;font-weight:400;-webkit-text-stroke:0.35px #111;letter-spacing:0.167px">Copy</div><div class="t " style="left:160px;top:219.82px;font-size:21.5px;color:#111;font-weight:400;-webkit-text-stroke:0.35px #111;letter-spacing:0.400px">Format</div><div class="t " style="left:298px;top:141.60px;font-size:24px;color:#111;font-weight:400;-webkit-text-stroke:0.35px #111;letter-spacing:0.750px">Calibri</div><svg class="r" style="left:580px;top:140px;" width="30" height="26" viewBox="0 0 30 26"><g transform="translate(-580,-140)" fill="#111"><rect x="589.6" y="144.7" width="2.6" height="17.3"/><polygon points="585,148.6 589.6,144.7 590.8,147.6 585.6,151.8"/><rect x="600.7" y="144.7" width="2.6" height="17.3"/><polygon points="596.1,148.6 600.7,144.7 601.9,147.6 596.7,151.8"/></g></svg><div class="t " style="left:694px;top:131.87px;font-size:37.8px;color:#333;font-weight:400;transform:scaleX(0.84);transform-origin:0 0">A</div><div class="t " style="left:749px;top:139.35px;font-size:29px;color:#333;font-weight:400;transform:scaleX(0.91);transform-origin:0 0">A</div><div class="t " style="left:302px;top:202.30px;font-size:28px;color:#333;font-weight:700;transform:scaleX(0.8);transform-origin:0 0">B</div><div class="t " style="left:355.5px;top:201.35px;font-size:29px;color:#333;font-weight:400;font-family:'Liberation Serif',serif;font-style:italic">I</div><div class="t " style="left:403.5px;top:202.60px;font-size:26px;color:#333;font-weight:400;transform:scaleX(0.85);transform-origin:0 0">U</div><div class="t " style="left:693.3px;top:196.80px;font-size:32px;color:#333;font-weight:400;transform:scaleX(0.86);transform-origin:0 0">A</div><div class="t" style="left:1017px;top:136.5px;font-size:22px;color:#333;transform:rotate(-45deg);transform-origin:50% 50%">ab</div><div class="t " style="left:1157.5px;top:135.32px;font-size:21.5px;color:#444;font-weight:400;letter-spacing:0.3px">ab</div><div class="t " style="left:1157.5px;top:149.32px;font-size:21.5px;color:#444;font-weight:400;">c</div><div class="t " style="left:1199px;top:144.62px;font-size:21.5px;color:#111;font-weight:400;-webkit-text-stroke:0.35px #111;letter-spacing:0.375px">Wrap Text</div><div class="t " style="left:1198px;top:208.62px;font-size:21.5px;color:#111;font-weight:400;-webkit-text-stroke:0.35px #111;letter-spacing:0.462px">Merge &amp; Center</div><div class="t " style="left:1439px;top:141.60px;font-size:24px;color:#111;font-weight:400;-webkit-text-stroke:0.35px #111;letter-spacing:0.333px">General</div><div class="t " style="left:1441px;top:203.80px;font-size:32px;color:#333;font-weight:400;transform:scaleX(0.8);transform-origin:0 0">$</div><div class="t " style="left:1783px;top:199.82px;font-size:21.5px;color:#111;font-weight:400;-webkit-text-stroke:0.35px #111;letter-spacing:0.700px">Conditional</div><div class="t " style="left:1785px;top:223.62px;font-size:21.5px;color:#111;font-weight:400;-webkit-text-stroke:0.35px #111;letter-spacing:0.778px">Formatting</div><div class="t " style="left:1917px;top:199.82px;font-size:21.5px;color:#111;font-weight:400;-webkit-text-stroke:0.35px #111;letter-spacing:0.500px">Format</div><div class="t " style="left:1911.5px;top:223.62px;font-size:21.5px;color:#111;font-weight:400;-webkit-text-stroke:0.35px #111;letter-spacing:0.500px">as Table</div><div class="t " style="left:2033.5px;top:199.82px;font-size:21.5px;color:#111;font-weight:400;-webkit-text-stroke:0.35px #111;letter-spacing:0.333px">Cell</div><div class="t " style="left:2021.5px;top:223.62px;font-size:21.5px;color:#111;font-weight:400;-webkit-text-stroke:0.35px #111;letter-spacing:0.600px">Styles</div><div class="t " style="left:2160.5px;top:199.82px;font-size:21.5px;color:#111;font-weight:400;-webkit-text-stroke:0.35px #111;letter-spacing:0.700px">Insert</div><div class="t " style="left:2258px;top:199.82px;font-size:21.5px;color:#111;font-weight:400;-webkit-text-stroke:0.35px #111;letter-spacing:0.200px">Delete</div><div class="t " style="left:2356px;top:199.82px;font-size:21.5px;color:#111;font-weight:400;-webkit-text-stroke:0.35px #111;letter-spacing:0.400px">Format</div><div class="t " style="left:2533px;top:132.32px;font-size:21.5px;color:#111;font-weight:400;-webkit-text-stroke:0.35px #111;letter-spacing:0.333px">AutoSum</div><div class="t " style="left:2532px;top:176.32px;font-size:21.5px;color:#111;font-weight:400;-webkit-text-stroke:0.35px #111;letter-spacing:0.500px">Fill</div><div class="t " style="left:2532px;top:219.82px;font-size:21.5px;color:#111;font-weight:400;-webkit-text-stroke:0.35px #111;letter-spacing:0.250px">Clear</div><div class="t " style="left:2673px;top:199.82px;font-size:21.5px;color:#111;font-weight:400;-webkit-text-stroke:0.35px #111;letter-spacing:0.540px">Sort &amp;</div><div class="t " style="left:2679.7px;top:223.92px;font-size:21.5px;color:#111;font-weight:400;-webkit-text-stroke:0.35px #111;letter-spacing:0.360px">Filter</div><div class="t " style="left:2771.5px;top:199.82px;font-size:21.5px;color:#111;font-weight:400;-webkit-text-stroke:0.35px #111;letter-spacing:0.180px">Find &amp;</div><div class="t " style="left:2771.5px;top:223.92px;font-size:21.5px;color:#111;font-weight:400;-webkit-text-stroke:0.35px #111;letter-spacing:0.480px">Select</div><div class="t " style="left:2900px;top:199.82px;font-size:21.5px;color:#111;font-weight:400;-webkit-text-stroke:0.35px #111;letter-spacing:0.717px">Add-ins</div><svg class="r" style="left:2870px;top:65px;" width="40" height="37" viewBox="0 0 40 37"><g transform="translate(-2870,-65)"><path d="M2880 80.5 V94.8 H2896.9 V90.4" fill="none" stroke="#2f6d44" stroke-width="2.1"/><path d="M2895.6 73.3 L2902.2 80.7 L2895.6 88.2 V84.6 Q2888.5 84.3 2884.6 88.6 Q2885.8 77.6 2895.6 76.9 Z" fill="none" stroke="#2f6d44" stroke-width="1.7" stroke-linejoin="miter"/></g></svg><div class="r" style="left:0px;top:1662px;width:3010px;height:53px;background:linear-gradient(#ececec,#f1f1f1 30%,#efefef)"></div><div class="r" style="left:0px;top:1662px;width:3010px;height:2px;background:#c9c9c9"></div><div class="r" style="left:0px;top:1664px;width:111px;height:50px;background:linear-gradient(#e9e9e9,#f0f0f0 40%,#ededed)"></div><div class="r" style="left:110px;top:1664px;width:2px;height:41px;background:#cdcdcd"></div><svg class="r" style="left:15px;top:1675px;" width="70" height="28" viewBox="0 0 70 28"><path d="M18.7 4.3 L6 13.7 L18.7 23.5 Z" fill="#b3b3b3" stroke="#b3b3b3" stroke-width="1.5" stroke-linejoin="round"/><path d="M51 4.3 L63.7 13.7 L51 23.5 Z" fill="#5a5a5a" stroke="#5a5a5a" stroke-width="1.5" stroke-linejoin="round"/></svg><div class="r" style="left:0px;top:1705px;width:3010px;height:9px;background:linear-gradient(#efefef,#e9e9e9)"></div><div class="r" style="left:0px;top:1714px;width:3010px;height:2px;background:#a9a9a9"></div><div class="r" style="left:566.5px;top:1662px;width:345px;height:46px;background:linear-gradient(#ffffff,#f9f9f9);border-left:1.6px solid #c4c4c4;border-right:1.6px solid #c4c4c4;border-bottom:2px solid #b5b5b5;border-radius:0 0 5px 5px;box-sizing:border-box"></div><div class="t " style="left:605.7px;top:1675.50px;font-size:24px;color:#3b7b4e;font-weight:700;;letter-spacing:0.181px">INCOME STATEMENTS</div><div class="t " style="left:154px;top:1676.79px;font-size:23.3px;color:#595959;font-weight:400;-webkit-text-stroke:0.6px #595959;letter-spacing:0.967px">Document and Entity Information</div><div class="t " style="left:958.9px;top:1676.79px;font-size:23.3px;color:#595959;font-weight:400;-webkit-text-stroke:0.6px #595959;letter-spacing:0.237px">COMPREHENSIVE INCOME STATEMENTS</div><div class="t " style="left:1514.7px;top:1676.79px;font-size:23.3px;color:#595959;font-weight:400;-webkit-text-stroke:0.6px #595959;letter-spacing:0.392px">BALANCE SHEETS</div><div class="t " style="left:1810.5px;top:1676.79px;font-size:23.3px;color:#595959;font-weight:400;-webkit-text-stroke:0.6px #595959;letter-spacing:0.472px">BALANCE SHEETS (Parenthetical)</div><div class="t " style="left:2276.6px;top:1676.79px;font-size:23.3px;color:#595959;font-weight:400;-webkit-text-stroke:0.6px #595959;letter-spacing:0.270px">CASH FLOWS STATEMENTS</div><div class="t" style="left:2686px;top:1676.5px;font-size:23.3px;color:#595959;letter-spacing:0.15px;-webkit-text-stroke:0.6px #595959;width:190px;overflow:hidden;-webkit-mask-image:linear-gradient(90deg,#000 55%,rgba(0,0,0,0.15) 100%);mask-image:linear-gradient(90deg,#000 55%,rgba(0,0,0,0.15) 100%)">STOCKHOLDERS</div><div class="r" style="left:1477.5px;top:1664px;width:2px;height:41px;background:#d2d2d2"></div><div class="r" style="left:1765.5px;top:1664px;width:2px;height:41px;background:#d2d2d2"></div><div class="r" style="left:2234px;top:1664px;width:2px;height:41px;background:#d2d2d2"></div><div class="r" style="left:2638px;top:1664px;width:2px;height:41px;background:#d2d2d2"></div><div class="r" style="left:2876px;top:1664px;width:2px;height:41px;background:#d2d2d2"></div><div class="r" style="left:2952px;top:1664px;width:2px;height:41px;background:#d2d2d2"></div><svg class="r" style="left:2900px;top:1672px;" width="32" height="30" viewBox="0 0 32 30"><path d="M16 5.5 V25 M6 15.3 H26" stroke="#555" stroke-width="4"/></svg><div class="r" style="left:0px;top:1716px;width:3010px;height:24px;background:linear-gradient(#e1e1e1,#d3d3d3)"></div><div class="t " style="left:38px;top:1727.95px;font-size:23px;color:#555;font-weight:400;-webkit-text-stroke:0.6px #595959;letter-spacing:0.625px">Ready</div><div class="t " style="left:191px;top:1727.95px;font-size:23px;color:#555;font-weight:400;-webkit-text-stroke:0.6px #595959;letter-spacing:1.040px">Accessibility: Investigate</div><svg class="r" style="left:140px;top:1716px;" width="45" height="24" viewBox="0 0 45 24"><g transform="translate(-140,-1716)" fill="none" stroke="#5f5f5f" stroke-width="1.8" stroke-linejoin="round"><circle cx="160.7" cy="1726.9" r="3.6"/><path d="M155.5 1741 V1734.2 L149.6 1731.6 Q147 1730.2 148.2 1728.2 Q149.4 1726.4 152 1727.4 L158 1729.9 Q160.7 1731 163.4 1729.9 L169.4 1727.4 Q172 1726.4 173.2 1728.2 Q174.4 1730.2 171.8 1731.6 L166 1734.3"/><path d="M164.2 1737.8 L167.2 1741 M176.7 1737.8 L173.7 1741"/></g></svg><div class="r" style="left:2376px;top:1716px;width:74px;height:24px;background:#a6a6a6"></div><svg class="r" style="left:2398px;top:1722px;" width="30" height="18" viewBox="0 0 30 18"><rect x="2.5" y="2" width="25.5" height="20" fill="none" stroke="#fff" stroke-width="2.2"/><path d="M10.8 2 V22 M19.5 2 V22 M2.5 9 H28" stroke="#fff" stroke-width="2"/></svg><svg class="r" style="left:2468px;top:1722px;" width="34" height="18" viewBox="0 0 34 18"><rect x="3" y="2" width="27.5" height="20" fill="none" stroke="#666" stroke-width="2.2"/><rect x="8" y="7" width="17.5" height="15" fill="none" stroke="#666" stroke-width="2"/><path d="M11 11 H22.5 M11 15 H22.5" stroke="#666" stroke-width="2"/></svg><svg class="r" style="left:2540px;top:1722px;" width="34" height="18" viewBox="0 0 34 18"><rect x="3" y="2" width="27" height="20" fill="none" stroke="#666" stroke-width="2.2"/><path d="M12.2 2 V22 M19.8 2 V22" stroke="#666" stroke-width="2"/></svg><div class="r" style="left:2608.5px;top:1735.5px;width:15.5px;height:3.5px;background:#666"></div><div class="r" style="left:2638px;top:1734.3px;width:200px;height:12px;background:#8f8f8f;border-radius:6px"></div><div class="r" style="left:2721.5px;top:1721px;width:32px;height:32px;background:#f3f3f3;border-radius:50%;box-shadow:0 0 1.5px 0.5px rgba(0,0,0,0.35)"></div><svg class="r" style="left:2850px;top:1726px;" width="20" height="14" viewBox="0 0 20 14"><path d="M9.9 3 V20 M1.9 10.5 H17.9" stroke="#666" stroke-width="3.5"/></svg><div class="t " style="left:2901.5px;top:1727.95px;font-size:23px;color:#555;font-weight:400;-webkit-text-stroke:0.6px #595959;letter-spacing:1.500px">100%</div>
</div></body></html>
